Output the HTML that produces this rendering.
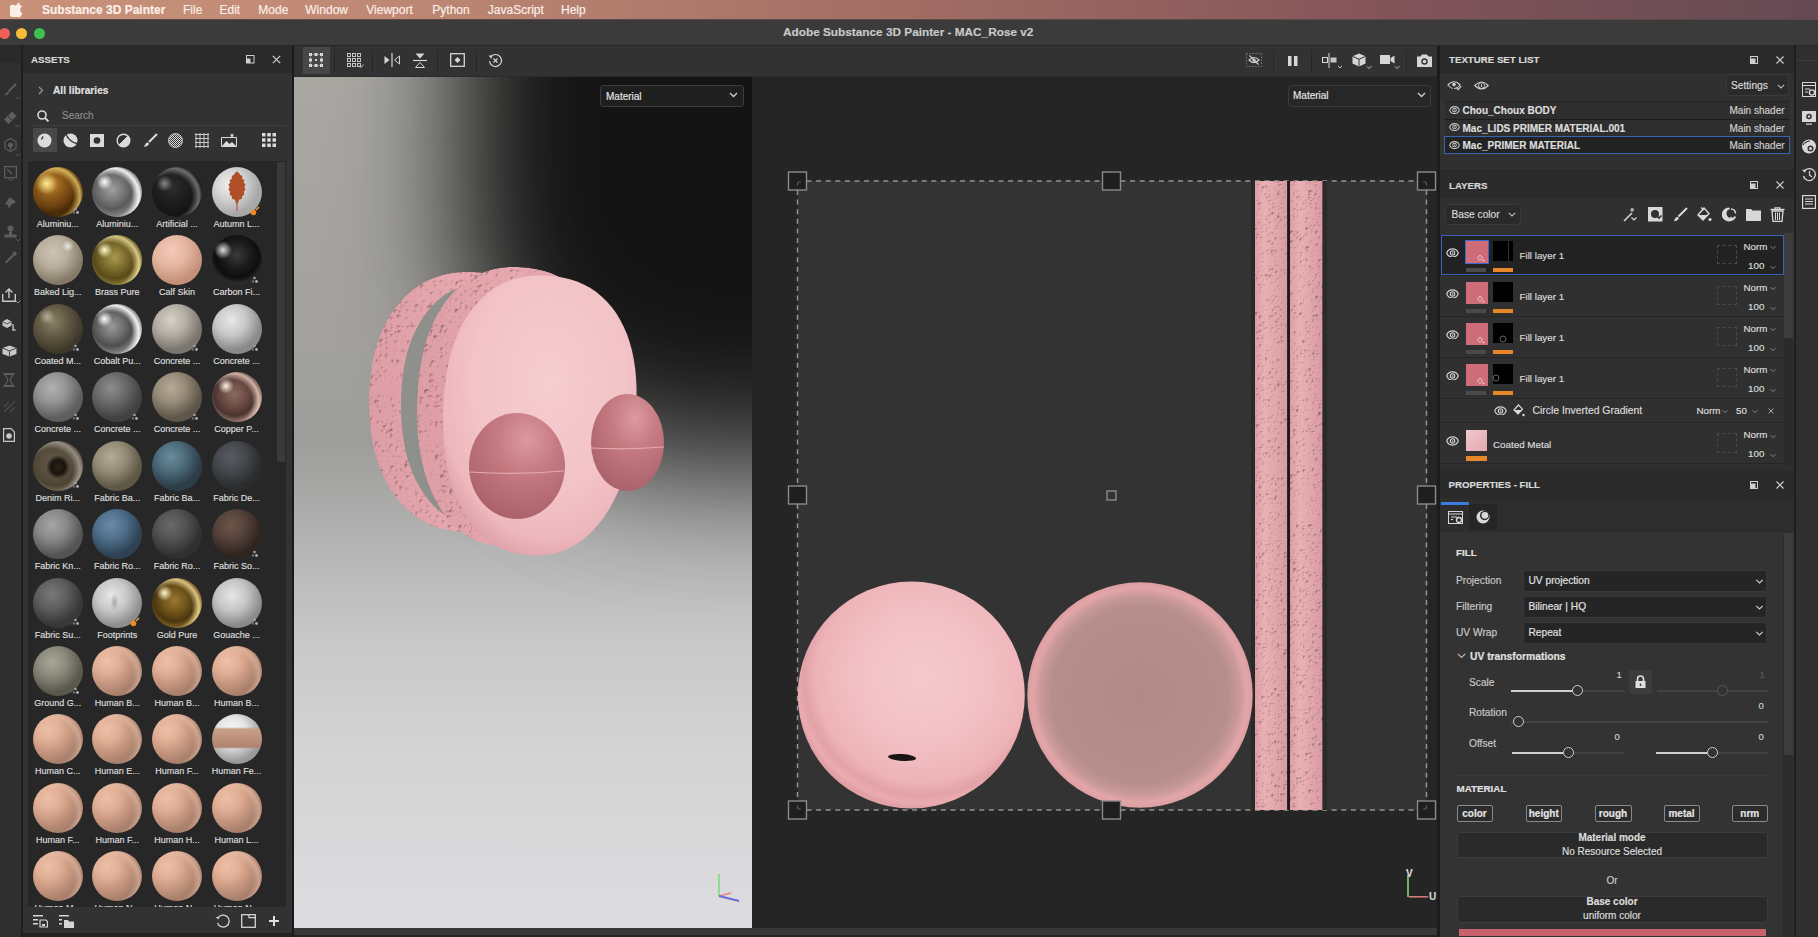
<!DOCTYPE html><html><head><meta charset="utf-8"><style>
*{box-sizing:border-box;margin:0;padding:0}
html,body{width:1818px;height:937px;overflow:hidden;background:#2d2d2d;font-family:"Liberation Sans",sans-serif;color:#d0d0d0}
.ab{position:absolute}
.t{position:absolute;white-space:pre;line-height:1;-webkit-text-stroke:0.18px currentColor}
</style></head><body>
<div class="ab" style="left:0;top:0;width:1818px;height:20px;background:linear-gradient(90deg,#c99178 0%,#bf8975 20%,#b07c6c 35%,#9c6862 55%,#84555a 75%,#654a53 100%)"></div>
<div class="ab" style="left:0;top:19px;width:1818px;height:1px;background:#5a4a48"></div>
<div class="t" style="left:42px;top:4px;font-size:12px;font-weight:700;color:#fbeee8">Substance 3D Painter</div>
<div class="t" style="left:183px;top:4px;font-size:12px;font-weight:400;color:#fbeee8">File</div>
<div class="t" style="left:219.5px;top:4px;font-size:12px;font-weight:400;color:#fbeee8">Edit</div>
<div class="t" style="left:258.3px;top:4px;font-size:12px;font-weight:400;color:#fbeee8">Mode</div>
<div class="t" style="left:305.3px;top:4px;font-size:12px;font-weight:400;color:#fbeee8">Window</div>
<div class="t" style="left:366.3px;top:4px;font-size:12px;font-weight:400;color:#fbeee8">Viewport</div>
<div class="t" style="left:432.3px;top:4px;font-size:12px;font-weight:400;color:#fbeee8">Python</div>
<div class="t" style="left:487.8px;top:4px;font-size:12px;font-weight:400;color:#fbeee8">JavaScript</div>
<div class="t" style="left:561px;top:4px;font-size:12px;font-weight:400;color:#fbeee8">Help</div>
<svg class="ab" style="left:10px;top:2px" width="14" height="15" viewBox="0 0 14 15"><path d="M9.6 0.5c0.1 1-0.3 2-0.9 2.7-0.6 0.7-1.5 1.2-2.4 1.1-0.1-1 0.4-2 0.9-2.6 0.6-0.7 1.6-1.2 2.4-1.2zM12.6 11.1c-0.4 0.9-0.6 1.3-1.1 2.1-0.7 1.1-1.7 2.4-2.9 2.4-1.1 0-1.4-0.7-2.9-0.7-1.5 0-1.8 0.7-2.9 0.7-1.200 0-2.1-1.200-2.8-2.300-2-3-2.2-6.600-1-8.500 0.9-1.3 2.200-2.1 3.500-2.1 1.300 0 2.100 0.700 3.200 0.700 1 0 1.700-0.700 3.100-0.700 1.200 0 2.400 0.600 3.300 1.700-2.900 1.600-2.400 5.700 0.500 6.800z" fill="#fbeee8"/></svg>
<div class="ab" style="left:0;top:20px;width:1818px;height:26px;background:#3b3b3b"></div>
<div class="ab" style="left:0;top:45px;width:1818px;height:1px;background:#262626"></div>
<div class="ab" style="left:-0.7999999999999998px;top:27.5px;width:11px;height:11px;border-radius:50%;background:#ee5f58"></div>
<div class="ab" style="left:16.3px;top:27.5px;width:11px;height:11px;border-radius:50%;background:#f6bd3b"></div>
<div class="ab" style="left:33.7px;top:27.5px;width:11px;height:11px;border-radius:50%;background:#3fc24b"></div>
<div class="t" style="left:783px;top:27px;font-size:11.8px;font-weight:700;color:#c9c9c9">Adobe Substance 3D Painter - MAC_Rose v2</div>
<div class="ab" style="left:0;top:46px;width:21px;height:891px;background:#2f2f2f"></div>
<div class="ab" style="left:21px;top:46px;width:2px;height:891px;background:#1e1e1e"></div>
<div class="ab" style="left:23px;top:46px;width:269px;height:887px;background:#323232"></div>
<div class="ab" style="left:23px;top:46px;width:269px;height:27px;background:#2a2a2a"></div>
<div class="t" style="left:31px;top:55px;font-size:9.7px;font-weight:700;color:#d8d8d8">ASSETS</div>
<div class="ab" style="left:28px;top:161px;width:258px;height:746px;background:#272727"></div>
<div class="ab" style="left:277px;top:162px;width:8px;height:300px;background:#3a3a3a"></div>
<div class="ab" style="left:292px;top:46px;width:2px;height:891px;background:#1a1a1a"></div>
<div class="ab" style="left:23px;top:933px;width:269px;height:4px;background:#222"></div>
<svg class="ab" style="left:246px;top:55px" width="9" height="9" viewBox="0 0 9 9"><rect x="0.5" y="0.5" width="7.5" height="7.5" fill="none" stroke="#cfcfcf" stroke-width="1"/><path d="M0.5 3.5h4v4.5h-4z" fill="#cfcfcf"/></svg>
<svg class="ab" style="left:272px;top:55px" width="9" height="9" viewBox="0 0 9 9"><path d="M0.8 0.8L8.2 8.2M8.2 0.8L0.8 8.2" stroke="#cfcfcf" stroke-width="1.2"/></svg>
<svg class="ab" style="left:38px;top:86px" width="6" height="9" viewBox="0 0 6 9"><path d="M1 1l3.5 3.5L1 8" fill="none" stroke="#9a9a9a" stroke-width="1.2"/></svg>
<div class="t" style="left:53px;top:85.5px;font-size:10.2px;font-weight:700;color:#e0e0e0">All libraries</div>
<svg class="ab" style="left:37px;top:110px" width="13" height="12" viewBox="0 0 13 12"><circle cx="5" cy="5" r="4" fill="none" stroke="#d8d8d8" stroke-width="1.6"/><path d="M8 8l3.5 3.5" stroke="#d8d8d8" stroke-width="1.8"/></svg>
<div class="t" style="left:62px;top:111px;font-size:10px;color:#8a8a8a">Search</div>
<div class="ab" style="left:32px;top:125px;width:254px;height:1px;background:#3e3e3e"></div>
<div class="ab" style="left:33px;top:128px;width:24px;height:24px;background:#484848"></div>
<svg class="ab" style="left:37px;top:133px" width="15" height="15" viewBox="0 0 15 15"><circle cx="7.5" cy="7.5" r="7" fill="#dcdcdc"/><path d="M4.5 6.5l1.5-3" stroke="#333" stroke-width="1.6"/></svg>
<svg class="ab" style="left:63px;top:133px" width="15" height="15" viewBox="0 0 15 15"><circle cx="7.5" cy="7.5" r="7" fill="#dcdcdc"/><path d="M3 1.5c2 4 5 8 11 9" fill="none" stroke="#333" stroke-width="1.5"/></svg>
<svg class="ab" style="left:90px;top:134px" width="14" height="13" viewBox="0 0 14 13"><rect x="0" y="0" width="14" height="13" fill="#dcdcdc"/><circle cx="7" cy="6.5" r="3.3" fill="#333"/></svg>
<svg class="ab" style="left:116px;top:133px" width="15" height="15" viewBox="0 0 15 15"><circle cx="7.5" cy="7.5" r="6.3" fill="none" stroke="#dcdcdc" stroke-width="1.4"/><path d="M12 3A6.3 6.3 0 0 1 3 12z" fill="#dcdcdc"/><path d="M3.5 11.5L11.5 3.5" stroke="#dcdcdc" stroke-width="1"/></svg>
<svg class="ab" style="left:143px;top:133px" width="15" height="15" viewBox="0 0 15 15"><path d="M14 1L6 9" stroke="#dcdcdc" stroke-width="2"/><path d="M5 9.5c-2 0-3 2-4 4.5 2.5-0.5 5-1.5 5-3.5z" fill="#dcdcdc"/></svg>
<svg class="ab" style="left:168px;top:133px" width="15" height="15" viewBox="0 0 15 15"><defs><pattern id="chk" width="2" height="2" patternUnits="userSpaceOnUse"><rect width="1" height="1" fill="#dcdcdc"/><rect x="1" y="1" width="1" height="1" fill="#dcdcdc"/></pattern></defs><circle cx="7.5" cy="7.5" r="7" fill="url(#chk)"/><circle cx="7.5" cy="7.5" r="7" fill="none" stroke="#dcdcdc" stroke-width="0.8"/></svg>
<svg class="ab" style="left:194px;top:133px" width="16" height="15" viewBox="0 0 16 15"><path d="M1 1.5h14M1 5.5h14M1 9.5h14M1 13.5h14M2 0v15M6 0v15M10 0v15M14 0v15" stroke="#dcdcdc" stroke-width="1" opacity="0.9"/></svg>
<svg class="ab" style="left:221px;top:132px" width="16" height="15" viewBox="0 0 16 15"><path d="M0.5 5.5h15v9h-15z" fill="none" stroke="#dcdcdc" stroke-width="1"/><path d="M1 14l4.5-5 3 3 2.5-2 4 4z" fill="#dcdcdc"/><path d="M11 1l0.6 1.6 1.6 0.2-1.2 1 0.4 1.6-1.4-0.9-1.4 0.9 0.4-1.6-1.2-1 1.6-0.2z" fill="#dcdcdc"/></svg>
<svg class="ab" style="left:262px;top:133px" width="14" height="14" viewBox="0 0 14 14"><g fill="#dcdcdc"><rect x="0" y="0" width="3.5" height="3.5"/><rect x="5.25" y="0" width="3.5" height="3.5"/><rect x="10.5" y="0" width="3.5" height="3.5"/><rect x="0" y="5.25" width="3.5" height="3.5"/><rect x="5.25" y="5.25" width="3.5" height="3.5"/><rect x="10.5" y="5.25" width="3.5" height="3.5"/><rect x="0" y="10.5" width="3.5" height="3.5"/><rect x="5.25" y="10.5" width="3.5" height="3.5"/><rect x="10.5" y="10.5" width="3.5" height="3.5"/></g></svg>
<div class="ab" style="left:28px;top:161px;width:249px;height:746px;overflow:hidden">
<div class="ab" style="left:4.8px;top:5.8px;width:50px;height:50px;border-radius:50%;background:radial-gradient(circle 11px at 27% 33%,rgba(255,240,150,0.95) 0%,rgba(255,255,255,0) 100%),radial-gradient(circle 32px at 38% 58%,transparent 21px,rgba(255,220,120,0.7) 28px,transparent 32px),radial-gradient(circle 28px at 35% 35%,#c08a30 0%,#8e5a18 45%,#6a4010 80%,#4a2c08 100%)"></div>
<div class="t" style="left:-10.2px;width:80px;text-align:center;top:58.8px;font-size:9px;color:#dcdcdc">Aluminiu...</div>
<svg class="ab" style="left:43.8px;top:46.3px" width="8" height="8" viewBox="0 0 8 8"><circle cx="3.5" cy="2" r="1.3" fill="#a0a0a0"/><circle cx="2" cy="5.5" r="1.2" fill="#707070"/><circle cx="5.5" cy="5.5" r="1.4" fill="#b0b0b0"/></svg>
<div class="ab" style="left:64.2px;top:5.8px;width:50px;height:50px;border-radius:50%;background:radial-gradient(circle 8px at 25% 30%,rgba(255,255,255,1) 0%,rgba(255,255,255,0) 100%),radial-gradient(circle 32px at 38% 58%,transparent 21px,rgba(255,255,255,0.9) 28px,transparent 32px),radial-gradient(circle 28px at 40% 45%,#a0a0a0 0%,#787878 40%,#5a5a5a 70%,#8a8a8a 100%)"></div>
<div class="t" style="left:49.2px;width:80px;text-align:center;top:58.8px;font-size:9px;color:#dcdcdc">Aluminiu...</div>
<div class="ab" style="left:124.0px;top:5.8px;width:50px;height:50px;border-radius:50%;background:radial-gradient(circle 8px at 25% 33%,rgba(200,200,200,0.6) 0%,rgba(255,255,255,0) 100%),radial-gradient(circle 32px at 38% 58%,transparent 21px,rgba(180,180,180,0.55) 28px,transparent 32px),radial-gradient(circle 28px at 40% 40%,#2e2e2e 0%,#1c1c1c 60%,#141414 100%)"></div>
<div class="t" style="left:109.0px;width:80px;text-align:center;top:58.8px;font-size:9px;color:#dcdcdc">Artificial ...</div>
<div class="ab" style="left:183.5px;top:5.8px;width:50px;height:50px;border-radius:50%;background:radial-gradient(circle 30px at 35% 35%,#f0f0f0 0%,#d2d2d2 50%,#a8a8a8 100%)"></div>
<div class="t" style="left:168.5px;width:80px;text-align:center;top:58.8px;font-size:9px;color:#dcdcdc">Autumn L...</div>
<svg class="ab" style="left:221.5px;top:44.8px" width="10" height="10" viewBox="0 0 10 10"><circle cx="3.5" cy="6.5" r="2.8" fill="#f08a20"/><path d="M6 4l3-3" stroke="#f0a040" stroke-width="1.6"/></svg>
<div class="ab" style="left:4.8px;top:74.2px;width:50px;height:50px;border-radius:50%;background:radial-gradient(circle 6px at 70% 22%,rgba(255,255,255,0.7) 0%,rgba(255,255,255,0) 100%),radial-gradient(circle 30px at 40% 35%,#cdc4b4 0%,#b8ae9c 50%,#857a68 100%)"></div>
<div class="t" style="left:-10.2px;width:80px;text-align:center;top:127.2px;font-size:9px;color:#dcdcdc">Baked Lig...</div>
<div class="ab" style="left:64.2px;top:74.2px;width:50px;height:50px;border-radius:50%;background:radial-gradient(circle 8px at 25% 30%,rgba(255,250,200,1) 0%,rgba(255,255,255,0) 100%),radial-gradient(circle 32px at 38% 58%,transparent 21px,rgba(255,240,170,0.75) 28px,transparent 32px),radial-gradient(circle 28px at 45% 45%,#a89a50 0%,#7a6a2a 45%,#5a4a18 75%,#8a7a38 100%)"></div>
<div class="t" style="left:49.2px;width:80px;text-align:center;top:127.2px;font-size:9px;color:#dcdcdc">Brass Pure</div>
<div class="ab" style="left:124.0px;top:74.2px;width:50px;height:50px;border-radius:50%;background:radial-gradient(circle 32px at 38% 30%,#f2cab8 0%,#e6b6a2 50%,#c49078 100%)"></div>
<div class="t" style="left:109.0px;width:80px;text-align:center;top:127.2px;font-size:9px;color:#dcdcdc">Calf Skin</div>
<div class="ab" style="left:183.5px;top:74.2px;width:50px;height:50px;border-radius:50%;background:radial-gradient(circle 9px at 22% 30%,rgba(255,255,255,0.85) 0%,rgba(255,255,255,0) 100%),radial-gradient(circle 28px at 50% 40%,#3a3a3a 0%,#1a1a1a 50%,#0e0e0e 80%,#2a2a2a 100%)"></div>
<div class="t" style="left:168.5px;width:80px;text-align:center;top:127.2px;font-size:9px;color:#dcdcdc">Carbon Fi...</div>
<svg class="ab" style="left:222.5px;top:114.8px" width="8" height="8" viewBox="0 0 8 8"><circle cx="3.5" cy="2" r="1.3" fill="#a0a0a0"/><circle cx="2" cy="5.5" r="1.2" fill="#707070"/><circle cx="5.5" cy="5.5" r="1.4" fill="#b0b0b0"/></svg>
<div class="ab" style="left:4.8px;top:142.7px;width:50px;height:50px;border-radius:50%;background:radial-gradient(circle 8px at 28% 25%,rgba(220,215,190,0.6) 0%,rgba(255,255,255,0) 100%),radial-gradient(circle 30px at 40% 35%,#8a8268 0%,#625a44 50%,#3e382a 100%)"></div>
<div class="t" style="left:-10.2px;width:80px;text-align:center;top:195.7px;font-size:9px;color:#dcdcdc">Coated M...</div>
<svg class="ab" style="left:43.8px;top:183.2px" width="8" height="8" viewBox="0 0 8 8"><circle cx="3.5" cy="2" r="1.3" fill="#a0a0a0"/><circle cx="2" cy="5.5" r="1.2" fill="#707070"/><circle cx="5.5" cy="5.5" r="1.4" fill="#b0b0b0"/></svg>
<div class="ab" style="left:64.2px;top:142.7px;width:50px;height:50px;border-radius:50%;background:radial-gradient(circle 8px at 25% 30%,rgba(255,255,255,1) 0%,rgba(255,255,255,0) 100%),radial-gradient(circle 32px at 38% 58%,transparent 21px,rgba(255,255,255,0.9) 28px,transparent 32px),radial-gradient(circle 28px at 40% 45%,#9a9a9a 0%,#707070 40%,#4e4e4e 70%,#8a8a8a 100%)"></div>
<div class="t" style="left:49.2px;width:80px;text-align:center;top:195.7px;font-size:9px;color:#dcdcdc">Cobalt Pu...</div>
<div class="ab" style="left:124.0px;top:142.7px;width:50px;height:50px;border-radius:50%;background:radial-gradient(circle 30px at 38% 32%,#d6d2ca 0%,#b4aea4 50%,#7a766e 100%)"></div>
<div class="t" style="left:109.0px;width:80px;text-align:center;top:195.7px;font-size:9px;color:#dcdcdc">Concrete ...</div>
<svg class="ab" style="left:163.0px;top:183.2px" width="8" height="8" viewBox="0 0 8 8"><circle cx="3.5" cy="2" r="1.3" fill="#a0a0a0"/><circle cx="2" cy="5.5" r="1.2" fill="#707070"/><circle cx="5.5" cy="5.5" r="1.4" fill="#b0b0b0"/></svg>
<div class="ab" style="left:183.5px;top:142.7px;width:50px;height:50px;border-radius:50%;background:radial-gradient(circle 30px at 38% 32%,#e8e8e8 0%,#c8c8c8 50%,#8a8a8a 100%)"></div>
<div class="t" style="left:168.5px;width:80px;text-align:center;top:195.7px;font-size:9px;color:#dcdcdc">Concrete ...</div>
<svg class="ab" style="left:222.5px;top:183.2px" width="8" height="8" viewBox="0 0 8 8"><circle cx="3.5" cy="2" r="1.3" fill="#a0a0a0"/><circle cx="2" cy="5.5" r="1.2" fill="#707070"/><circle cx="5.5" cy="5.5" r="1.4" fill="#b0b0b0"/></svg>
<div class="ab" style="left:4.8px;top:211.2px;width:50px;height:50px;border-radius:50%;background:radial-gradient(circle 30px at 38% 32%,#b2b2b2 0%,#929292 50%,#5e5e5e 100%)"></div>
<div class="t" style="left:-10.2px;width:80px;text-align:center;top:264.2px;font-size:9px;color:#dcdcdc">Concrete ...</div>
<svg class="ab" style="left:43.8px;top:251.7px" width="8" height="8" viewBox="0 0 8 8"><circle cx="3.5" cy="2" r="1.3" fill="#a0a0a0"/><circle cx="2" cy="5.5" r="1.2" fill="#707070"/><circle cx="5.5" cy="5.5" r="1.4" fill="#b0b0b0"/></svg>
<div class="ab" style="left:64.2px;top:211.2px;width:50px;height:50px;border-radius:50%;background:radial-gradient(circle 30px at 38% 32%,#8c8c8c 0%,#6a6a6a 50%,#424242 100%)"></div>
<div class="t" style="left:49.2px;width:80px;text-align:center;top:264.2px;font-size:9px;color:#dcdcdc">Concrete ...</div>
<svg class="ab" style="left:103.2px;top:251.7px" width="8" height="8" viewBox="0 0 8 8"><circle cx="3.5" cy="2" r="1.3" fill="#a0a0a0"/><circle cx="2" cy="5.5" r="1.2" fill="#707070"/><circle cx="5.5" cy="5.5" r="1.4" fill="#b0b0b0"/></svg>
<div class="ab" style="left:124.0px;top:211.2px;width:50px;height:50px;border-radius:50%;background:radial-gradient(circle 30px at 38% 32%,#b8ab98 0%,#968a78 50%,#5e5648 100%)"></div>
<div class="t" style="left:109.0px;width:80px;text-align:center;top:264.2px;font-size:9px;color:#dcdcdc">Concrete ...</div>
<svg class="ab" style="left:163.0px;top:251.7px" width="8" height="8" viewBox="0 0 8 8"><circle cx="3.5" cy="2" r="1.3" fill="#a0a0a0"/><circle cx="2" cy="5.5" r="1.2" fill="#707070"/><circle cx="5.5" cy="5.5" r="1.4" fill="#b0b0b0"/></svg>
<div class="ab" style="left:183.5px;top:211.2px;width:50px;height:50px;border-radius:50%;background:radial-gradient(circle 8px at 28% 28%,rgba(255,240,230,1) 0%,rgba(255,255,255,0) 100%),radial-gradient(circle 32px at 38% 58%,transparent 21px,rgba(240,210,195,0.8) 28px,transparent 32px),radial-gradient(circle 28px at 45% 45%,#8a6a60 0%,#6a4a42 45%,#4a3430 75%,#9a7a70 100%)"></div>
<div class="t" style="left:168.5px;width:80px;text-align:center;top:264.2px;font-size:9px;color:#dcdcdc">Copper P...</div>
<div class="ab" style="left:4.8px;top:279.6px;width:50px;height:50px;border-radius:50%;background:radial-gradient(circle 12px at 50% 52%,#2a2218 0%,#1a140e 60%,rgba(100,90,70,0.6) 100%),radial-gradient(circle 32px at 38% 58%,transparent 21px,rgba(255,255,255,0.85) 28px,transparent 32px),radial-gradient(circle 28px at 45% 45%,#6a5e50 0%,#4a3e32 50%,#2a2218 80%,#8a8070 100%)"></div>
<div class="t" style="left:-10.2px;width:80px;text-align:center;top:332.6px;font-size:9px;color:#dcdcdc">Denim Ri...</div>
<svg class="ab" style="left:43.8px;top:320.1px" width="8" height="8" viewBox="0 0 8 8"><circle cx="3.5" cy="2" r="1.3" fill="#a0a0a0"/><circle cx="2" cy="5.5" r="1.2" fill="#707070"/><circle cx="5.5" cy="5.5" r="1.4" fill="#b0b0b0"/></svg>
<div class="ab" style="left:64.2px;top:279.6px;width:50px;height:50px;border-radius:50%;background:radial-gradient(circle 30px at 38% 32%,#b4ac96 0%,#948c76 50%,#5e5846 100%)"></div>
<div class="t" style="left:49.2px;width:80px;text-align:center;top:332.6px;font-size:9px;color:#dcdcdc">Fabric Ba...</div>
<div class="ab" style="left:124.0px;top:279.6px;width:50px;height:50px;border-radius:50%;background:radial-gradient(circle 30px at 38% 32%,#6a8c9c 0%,#4c6a7a 50%,#2c3e48 100%)"></div>
<div class="t" style="left:109.0px;width:80px;text-align:center;top:332.6px;font-size:9px;color:#dcdcdc">Fabric Ba...</div>
<div class="ab" style="left:183.5px;top:279.6px;width:50px;height:50px;border-radius:50%;background:radial-gradient(circle 30px at 38% 32%,#585c60 0%,#44484c 50%,#2a2c2e 100%)"></div>
<div class="t" style="left:168.5px;width:80px;text-align:center;top:332.6px;font-size:9px;color:#dcdcdc">Fabric De...</div>
<div class="ab" style="left:4.8px;top:348.0px;width:50px;height:50px;border-radius:50%;background:radial-gradient(circle 30px at 38% 32%,#a6a6a6 0%,#888888 50%,#545454 100%)"></div>
<div class="t" style="left:-10.2px;width:80px;text-align:center;top:401.0px;font-size:9px;color:#dcdcdc">Fabric Kn...</div>
<div class="ab" style="left:64.2px;top:348.0px;width:50px;height:50px;border-radius:50%;background:radial-gradient(circle 30px at 38% 32%,#6a8aa8 0%,#4e6e8a 50%,#2e4254 100%)"></div>
<div class="t" style="left:49.2px;width:80px;text-align:center;top:401.0px;font-size:9px;color:#dcdcdc">Fabric Ro...</div>
<div class="ab" style="left:124.0px;top:348.0px;width:50px;height:50px;border-radius:50%;background:radial-gradient(circle 30px at 38% 32%,#6a6a6a 0%,#525252 50%,#303030 100%)"></div>
<div class="t" style="left:109.0px;width:80px;text-align:center;top:401.0px;font-size:9px;color:#dcdcdc">Fabric Ro...</div>
<div class="ab" style="left:183.5px;top:348.0px;width:50px;height:50px;border-radius:50%;background:radial-gradient(circle 30px at 38% 32%,#6e5648 0%,#54423a 50%,#302420 100%)"></div>
<div class="t" style="left:168.5px;width:80px;text-align:center;top:401.0px;font-size:9px;color:#dcdcdc">Fabric So...</div>
<svg class="ab" style="left:222.5px;top:388.5px" width="8" height="8" viewBox="0 0 8 8"><circle cx="3.5" cy="2" r="1.3" fill="#a0a0a0"/><circle cx="2" cy="5.5" r="1.2" fill="#707070"/><circle cx="5.5" cy="5.5" r="1.4" fill="#b0b0b0"/></svg>
<div class="ab" style="left:4.8px;top:416.5px;width:50px;height:50px;border-radius:50%;background:radial-gradient(circle 30px at 38% 32%,#787878 0%,#5e5e5e 50%,#383838 100%)"></div>
<div class="t" style="left:-10.2px;width:80px;text-align:center;top:469.5px;font-size:9px;color:#dcdcdc">Fabric Su...</div>
<svg class="ab" style="left:43.8px;top:457.0px" width="8" height="8" viewBox="0 0 8 8"><circle cx="3.5" cy="2" r="1.3" fill="#a0a0a0"/><circle cx="2" cy="5.5" r="1.2" fill="#707070"/><circle cx="5.5" cy="5.5" r="1.4" fill="#b0b0b0"/></svg>
<div class="ab" style="left:64.2px;top:416.5px;width:50px;height:50px;border-radius:50%;background:radial-gradient(ellipse 4px 9px at 45% 48%,rgba(120,120,120,0.5) 0%,rgba(120,120,120,0) 100%),radial-gradient(circle 30px at 40% 35%,#e8e8e8 0%,#c8c8c8 50%,#8e8e8e 100%)"></div>
<div class="t" style="left:49.2px;width:80px;text-align:center;top:469.5px;font-size:9px;color:#dcdcdc">Footprints</div>
<svg class="ab" style="left:102.2px;top:455.5px" width="10" height="10" viewBox="0 0 10 10"><circle cx="3.5" cy="6.5" r="2.8" fill="#f08a20"/><path d="M6 4l3-3" stroke="#f0a040" stroke-width="1.6"/></svg>
<div class="ab" style="left:124.0px;top:416.5px;width:50px;height:50px;border-radius:50%;background:radial-gradient(circle 8px at 25% 30%,rgba(255,250,210,1) 0%,rgba(255,255,255,0) 100%),radial-gradient(circle 32px at 38% 58%,transparent 21px,rgba(255,230,160,0.8) 28px,transparent 32px),radial-gradient(circle 28px at 45% 45%,#9a7a30 0%,#6e5218 45%,#4a3610 75%,#8a6a28 100%)"></div>
<div class="t" style="left:109.0px;width:80px;text-align:center;top:469.5px;font-size:9px;color:#dcdcdc">Gold Pure</div>
<div class="ab" style="left:183.5px;top:416.5px;width:50px;height:50px;border-radius:50%;background:radial-gradient(circle 30px at 40% 35%,#e6e6e6 0%,#c6c6c6 50%,#8a8a8a 100%)"></div>
<div class="t" style="left:168.5px;width:80px;text-align:center;top:469.5px;font-size:9px;color:#dcdcdc">Gouache ...</div>
<svg class="ab" style="left:222.5px;top:457.0px" width="8" height="8" viewBox="0 0 8 8"><circle cx="3.5" cy="2" r="1.3" fill="#a0a0a0"/><circle cx="2" cy="5.5" r="1.2" fill="#707070"/><circle cx="5.5" cy="5.5" r="1.4" fill="#b0b0b0"/></svg>
<div class="ab" style="left:4.8px;top:485.0px;width:50px;height:50px;border-radius:50%;background:radial-gradient(circle 30px at 38% 32%,#a8a698 0%,#8a887a 50%,#5a584c 100%)"></div>
<div class="t" style="left:-10.2px;width:80px;text-align:center;top:538.0px;font-size:9px;color:#dcdcdc">Ground G...</div>
<svg class="ab" style="left:43.8px;top:525.5px" width="8" height="8" viewBox="0 0 8 8"><circle cx="3.5" cy="2" r="1.3" fill="#a0a0a0"/><circle cx="2" cy="5.5" r="1.2" fill="#707070"/><circle cx="5.5" cy="5.5" r="1.4" fill="#b0b0b0"/></svg>
<div class="ab" style="left:64.2px;top:485.0px;width:50px;height:50px;border-radius:50%;background:radial-gradient(circle 32px at 38% 58%,transparent 22px,rgba(240,200,180,0.45) 28px,transparent 32px),radial-gradient(circle 34px at 30% 30%,#ecc0a8 0%,#e2b096 35%,#c89880 65%,#a8806c 100%)"></div>
<div class="t" style="left:49.2px;width:80px;text-align:center;top:538.0px;font-size:9px;color:#dcdcdc">Human B...</div>
<div class="ab" style="left:124.0px;top:485.0px;width:50px;height:50px;border-radius:50%;background:radial-gradient(circle 32px at 38% 58%,transparent 22px,rgba(240,200,180,0.45) 28px,transparent 32px),radial-gradient(circle 34px at 30% 30%,#ecc0a8 0%,#e2b096 35%,#c89880 65%,#a8806c 100%)"></div>
<div class="t" style="left:109.0px;width:80px;text-align:center;top:538.0px;font-size:9px;color:#dcdcdc">Human B...</div>
<div class="ab" style="left:183.5px;top:485.0px;width:50px;height:50px;border-radius:50%;background:radial-gradient(circle 32px at 38% 58%,transparent 22px,rgba(240,200,180,0.45) 28px,transparent 32px),radial-gradient(circle 34px at 30% 30%,#ecc0a8 0%,#e2b096 35%,#c89880 65%,#a8806c 100%)"></div>
<div class="t" style="left:168.5px;width:80px;text-align:center;top:538.0px;font-size:9px;color:#dcdcdc">Human B...</div>
<div class="ab" style="left:4.8px;top:553.4px;width:50px;height:50px;border-radius:50%;background:radial-gradient(circle 32px at 38% 58%,transparent 22px,rgba(240,200,180,0.45) 28px,transparent 32px),radial-gradient(circle 34px at 30% 30%,#ecc0a8 0%,#e2b096 35%,#c89880 65%,#a8806c 100%)"></div>
<div class="t" style="left:-10.2px;width:80px;text-align:center;top:606.4px;font-size:9px;color:#dcdcdc">Human C...</div>
<div class="ab" style="left:64.2px;top:553.4px;width:50px;height:50px;border-radius:50%;background:radial-gradient(circle 32px at 38% 58%,transparent 22px,rgba(240,200,180,0.45) 28px,transparent 32px),radial-gradient(circle 34px at 30% 30%,#ecc0a8 0%,#e2b096 35%,#c89880 65%,#a8806c 100%)"></div>
<div class="t" style="left:49.2px;width:80px;text-align:center;top:606.4px;font-size:9px;color:#dcdcdc">Human E...</div>
<div class="ab" style="left:124.0px;top:553.4px;width:50px;height:50px;border-radius:50%;background:radial-gradient(circle 32px at 38% 58%,transparent 22px,rgba(240,200,180,0.45) 28px,transparent 32px),radial-gradient(circle 34px at 30% 30%,#ecc0a8 0%,#e2b096 35%,#c89880 65%,#a8806c 100%)"></div>
<div class="t" style="left:109.0px;width:80px;text-align:center;top:606.4px;font-size:9px;color:#dcdcdc">Human F...</div>
<div class="ab" style="left:183.5px;top:553.4px;width:50px;height:50px;border-radius:50%;background:linear-gradient(180deg,rgba(0,0,0,0) 26%,#c8a088 30%,#b08470 66%,rgba(0,0,0,0) 70%),radial-gradient(circle 30px at 40% 35%,#ffffff 0%,#e2e2e2 50%,#9a9a9a 100%)"></div>
<div class="t" style="left:168.5px;width:80px;text-align:center;top:606.4px;font-size:9px;color:#dcdcdc">Human Fe...</div>
<div class="ab" style="left:4.8px;top:621.9px;width:50px;height:50px;border-radius:50%;background:radial-gradient(circle 32px at 38% 58%,transparent 22px,rgba(240,200,180,0.45) 28px,transparent 32px),radial-gradient(circle 34px at 30% 30%,#ecc0a8 0%,#e2b096 35%,#c89880 65%,#a8806c 100%)"></div>
<div class="t" style="left:-10.2px;width:80px;text-align:center;top:674.9px;font-size:9px;color:#dcdcdc">Human F...</div>
<div class="ab" style="left:64.2px;top:621.9px;width:50px;height:50px;border-radius:50%;background:radial-gradient(circle 32px at 38% 58%,transparent 22px,rgba(240,200,180,0.45) 28px,transparent 32px),radial-gradient(circle 34px at 30% 30%,#ecc0a8 0%,#e2b096 35%,#c89880 65%,#a8806c 100%)"></div>
<div class="t" style="left:49.2px;width:80px;text-align:center;top:674.9px;font-size:9px;color:#dcdcdc">Human F...</div>
<div class="ab" style="left:124.0px;top:621.9px;width:50px;height:50px;border-radius:50%;background:radial-gradient(circle 32px at 38% 58%,transparent 22px,rgba(240,200,180,0.45) 28px,transparent 32px),radial-gradient(circle 34px at 30% 30%,#ecc0a8 0%,#e2b096 35%,#c89880 65%,#a8806c 100%)"></div>
<div class="t" style="left:109.0px;width:80px;text-align:center;top:674.9px;font-size:9px;color:#dcdcdc">Human H...</div>
<div class="ab" style="left:183.5px;top:621.9px;width:50px;height:50px;border-radius:50%;background:radial-gradient(circle 32px at 38% 58%,transparent 22px,rgba(240,200,180,0.45) 28px,transparent 32px),radial-gradient(circle 34px at 30% 30%,#ecc0a8 0%,#e2b096 35%,#c89880 65%,#a8806c 100%)"></div>
<div class="t" style="left:168.5px;width:80px;text-align:center;top:674.9px;font-size:9px;color:#dcdcdc">Human L...</div>
<div class="ab" style="left:4.8px;top:690.3px;width:50px;height:50px;border-radius:50%;background:radial-gradient(circle 32px at 38% 58%,transparent 22px,rgba(240,200,180,0.45) 28px,transparent 32px),radial-gradient(circle 34px at 30% 30%,#ecc0a8 0%,#e2b096 35%,#c89880 65%,#a8806c 100%)"></div>
<div class="t" style="left:-10.2px;width:80px;text-align:center;top:743.3px;font-size:9px;color:#dcdcdc">Human M...</div>
<div class="ab" style="left:64.2px;top:690.3px;width:50px;height:50px;border-radius:50%;background:radial-gradient(circle 32px at 38% 58%,transparent 22px,rgba(240,200,180,0.45) 28px,transparent 32px),radial-gradient(circle 34px at 30% 30%,#ecc0a8 0%,#e2b096 35%,#c89880 65%,#a8806c 100%)"></div>
<div class="t" style="left:49.2px;width:80px;text-align:center;top:743.3px;font-size:9px;color:#dcdcdc">Human N...</div>
<div class="ab" style="left:124.0px;top:690.3px;width:50px;height:50px;border-radius:50%;background:radial-gradient(circle 32px at 38% 58%,transparent 22px,rgba(240,200,180,0.45) 28px,transparent 32px),radial-gradient(circle 34px at 30% 30%,#ecc0a8 0%,#e2b096 35%,#c89880 65%,#a8806c 100%)"></div>
<div class="t" style="left:109.0px;width:80px;text-align:center;top:743.3px;font-size:9px;color:#dcdcdc">Human N...</div>
<div class="ab" style="left:183.5px;top:690.3px;width:50px;height:50px;border-radius:50%;background:radial-gradient(circle 32px at 38% 58%,transparent 22px,rgba(240,200,180,0.45) 28px,transparent 32px),radial-gradient(circle 34px at 30% 30%,#ecc0a8 0%,#e2b096 35%,#c89880 65%,#a8806c 100%)"></div>
<div class="t" style="left:168.5px;width:80px;text-align:center;top:743.3px;font-size:9px;color:#dcdcdc">Human N...</div>
<svg class="ab" style="left:196.5px;top:9px" width="24" height="42" viewBox="0 0 24 42"><path d="M12 1C13 3 15 3 15 5C17 5 18 7 17 9C19 9 20 11 18.5 13C21 13 21 16 19 17C21 18 20.5 21 18.5 21.5C20 23 19 26 17 26C18 28 16 30 14 29.5C14 31 13 33 12.5 34L12.5 41H11.5L11.5 34C11 33 10 31 10 29.5C8 30 6 28 7 26C5 26 4 23 5.5 21.5C3.5 21 3 18 5 17C3 16 3 13 5.5 13C4 11 5 9 7 9C6 7 7 5 9 5C9 3 11 3 12 1Z" fill="#b04e28"/></svg>
</div>
<svg class="ab" style="left:33px;top:915px" width="15" height="13" viewBox="0 0 15 13"><g fill="#d4d4d4"><rect x="0" y="0" width="10" height="1.5"/><rect x="0" y="4" width="5" height="1.5"/><rect x="0" y="8" width="5" height="1.5"/><path d="M7 5h6l1.5 1.5V12H7z" fill="none" stroke="#d4d4d4" stroke-width="1.2"/><rect x="9" y="9" width="3" height="2"/></g></svg>
<svg class="ab" style="left:59px;top:915px" width="15" height="13" viewBox="0 0 15 13"><g fill="#d4d4d4"><rect x="0" y="0" width="10" height="1.5"/><rect x="0" y="4" width="3" height="1.5"/><rect x="0" y="8" width="3" height="1.5"/><path d="M5 5h4l1 1.5h5V13H5z"/></g></svg>
<svg class="ab" style="left:215px;top:914px" width="15" height="14" viewBox="0 0 15 14"><path d="M3 4A6 6 0 1 1 2.5 9" fill="none" stroke="#d4d4d4" stroke-width="1.3"/><path d="M0.5 3.5l3-1 0.5 3z" fill="#d4d4d4"/></svg>
<svg class="ab" style="left:241px;top:914px" width="15" height="14" viewBox="0 0 15 14"><rect x="0.7" y="0.7" width="13.6" height="12.6" fill="none" stroke="#d4d4d4" stroke-width="1.3"/><path d="M8 0.7v3h6.3" fill="none" stroke="#d4d4d4" stroke-width="1.2"/></svg>
<svg class="ab" style="left:269px;top:916px" width="10" height="10" viewBox="0 0 10 10"><path d="M5 0v10M0 5h10" stroke="#e0e0e0" stroke-width="2"/></svg>
<div class="ab" style="left:294px;top:46px;width:1143px;height:31px;background:#323232"></div>
<div class="ab" style="left:294px;top:76px;width:1143px;height:1px;background:#2a2a2a"></div>
<div class="ab" style="left:294px;top:77px;width:458px;height:851px;overflow:hidden;background:linear-gradient(180deg,#a8a7a2 0%,#a2a19d 32%,#9d9d9b 43%,#b4b4b4 55%,#c8c8c8 66%,#d4d4d4 80%,#dddce0 100%)"><div class="ab" style="left:0;top:0;width:458px;height:851px;transform:scaleY(1.15);transform-origin:0 0"><div class="ab" style="left:166px;top:-400px;width:700px;height:730px;border-bottom-left-radius:240px 200px;background:#141414;filter:blur(58px)"></div></div></div>
<svg class="ab" style="left:294px;top:77px" width="458" height="851" viewBox="294 77 458 851">
<defs>
<linearGradient id="bgv" x1="0" y1="0" x2="0" y2="1"><stop offset="0" stop-color="#a9a8a3"/><stop offset="0.4" stop-color="#a6a6a3"/><stop offset="0.62" stop-color="#c2c2c2"/><stop offset="1" stop-color="#e0dfe2"/></linearGradient>
<filter id="blurbg" filterUnits="userSpaceOnUse" x="0" y="-500" width="1400" height="1500"><feGaussianBlur stdDeviation="40"/></filter>
<filter id="tex" x="0" y="0" width="100%" height="100%"><feTurbulence type="turbulence" baseFrequency="0.2" numOctaves="2" seed="3" result="noise"/><feColorMatrix in="noise" type="matrix" values="0 0 0 0 0  0 0 0 0 0  0 0 0 0 0  -1 -1 -1 0 2" result="h"/><feDiffuseLighting in="h" surfaceScale="3.2" diffuseConstant="1.1" lighting-color="#ffffff" result="light"><feDistantLight azimuth="225" elevation="60"/></feDiffuseLighting><feComposite in="light" in2="SourceGraphic" operator="arithmetic" k1="0.62" k2="0" k3="0.42" k4="0" result="lit"/><feComposite in="lit" in2="SourceGraphic" operator="in"/></filter>
<radialGradient id="bodyg" cx="0.55" cy="0.38" r="0.65"><stop offset="0" stop-color="#f6cdd0"/><stop offset="0.6" stop-color="#f2c3c7"/><stop offset="0.86" stop-color="#eeb8bd"/><stop offset="1" stop-color="#dea2a9"/></radialGradient>
<radialGradient id="eyeg" cx="0.6" cy="0.25" r="0.8"><stop offset="0" stop-color="#dc9aa0"/><stop offset="0.4" stop-color="#c67a82"/><stop offset="1" stop-color="#a86068"/></radialGradient>
<linearGradient id="ringg" x1="0" y1="0" x2="1" y2="0"><stop offset="0" stop-color="#dc9ca4"/><stop offset="0.5" stop-color="#e6a8ae"/><stop offset="1" stop-color="#dc9ca4"/></linearGradient>
</defs>
<path fill="url(#ringg)" filter="url(#tex)" d="M567.0 402.0 L566.8 413.6 L566.1 423.6 L565.0 433.2 L563.5 442.3 L561.6 451.0 L559.2 459.4 L556.4 467.4 L553.2 475.0 L549.7 482.2 L545.7 489.0 L541.4 495.3 L536.7 501.3 L531.7 506.7 L526.4 511.6 L520.7 516.1 L514.8 520.0 L508.5 523.4 L502.0 526.2 L495.2 528.5 L488.2 530.2 L480.7 531.4 L472.7 531.9 L463.3 531.9 L455.3 531.4 L447.8 530.2 L440.8 528.5 L434.0 526.2 L427.5 523.4 L421.2 520.0 L415.3 516.1 L409.6 511.6 L404.3 506.7 L399.3 501.3 L394.6 495.3 L390.3 489.0 L386.3 482.2 L382.8 475.0 L379.6 467.4 L376.8 459.4 L374.4 451.0 L372.5 442.3 L371.0 433.2 L369.9 423.6 L369.2 413.6 L369.0 402.0 L369.2 390.4 L369.9 380.4 L371.0 370.8 L372.5 361.7 L374.4 353.0 L376.8 344.6 L379.6 336.6 L382.8 329.0 L386.3 321.8 L390.3 315.0 L394.6 308.7 L399.3 302.7 L404.3 297.3 L409.6 292.4 L415.3 287.9 L421.2 284.0 L427.5 280.6 L434.0 277.8 L440.8 275.5 L447.8 273.8 L455.3 272.6 L463.3 272.1 L472.7 272.1 L480.7 272.6 L488.2 273.8 L495.2 275.5 L502.0 277.8 L508.5 280.6 L514.8 284.0 L520.7 287.9 L526.4 292.4 L531.7 297.3 L536.7 302.7 L541.4 308.7 L545.7 315.0 L549.7 321.8 L553.2 329.0 L556.4 336.6 L559.2 344.6 L561.6 353.0 L563.5 361.7 L565.0 370.8 L566.1 380.4 L566.8 390.4Z"/><path fill="#8e908c" d="M571.0 405.0 L570.8 415.8 L570.2 425.3 L569.3 434.3 L568.0 442.8 L566.3 451.0 L564.3 458.9 L561.9 466.4 L559.2 473.5 L556.1 480.3 L552.7 486.6 L549.0 492.6 L545.0 498.1 L540.7 503.2 L536.1 507.9 L531.3 512.0 L526.2 515.7 L520.8 518.9 L515.2 521.6 L509.4 523.7 L503.3 525.3 L496.9 526.4 L490.0 526.9 L482.0 526.9 L475.1 526.4 L468.7 525.3 L462.6 523.7 L456.8 521.6 L451.2 518.9 L445.8 515.7 L440.7 512.0 L435.9 507.9 L431.3 503.2 L427.0 498.1 L423.0 492.6 L419.3 486.6 L415.9 480.3 L412.8 473.5 L410.1 466.4 L407.7 458.9 L405.7 451.0 L404.0 442.8 L402.7 434.3 L401.8 425.3 L401.2 415.8 L401.0 405.0 L401.2 394.2 L401.8 384.7 L402.7 375.7 L404.0 367.2 L405.7 359.0 L407.7 351.1 L410.1 343.6 L412.8 336.5 L415.9 329.7 L419.3 323.4 L423.0 317.4 L427.0 311.9 L431.3 306.8 L435.9 302.1 L440.7 298.0 L445.8 294.3 L451.2 291.1 L456.8 288.4 L462.6 286.3 L468.7 284.7 L475.1 283.6 L482.0 283.1 L490.0 283.1 L496.9 283.6 L503.3 284.7 L509.4 286.3 L515.2 288.4 L520.8 291.1 L526.2 294.3 L531.3 298.0 L536.1 302.1 L540.7 306.8 L545.0 311.9 L549.0 317.4 L552.7 323.4 L556.1 329.7 L559.2 336.5 L561.9 343.6 L564.3 351.1 L566.3 359.0 L568.0 367.2 L569.3 375.7 L570.2 384.7 L570.8 394.2Z"/>
<path fill="url(#ringg)" filter="url(#tex)" d="M608.8 413.7 L607.2 426.7 L605.4 437.8 L603.3 448.1 L600.9 457.8 L598.1 467.0 L595.0 475.8 L591.6 484.2 L587.8 492.0 L583.8 499.5 L579.4 506.4 L574.8 512.8 L569.9 518.8 L564.8 524.2 L559.4 529.0 L553.8 533.4 L548.0 537.1 L542.0 540.2 L535.8 542.8 L529.3 544.8 L522.6 546.1 L515.5 546.8 L507.8 546.9 L498.6 546.3 L491.1 545.1 L484.2 543.4 L477.7 541.2 L471.6 538.3 L465.7 534.9 L460.2 531.0 L455.0 526.4 L450.0 521.4 L445.4 515.8 L441.1 509.8 L437.1 503.2 L433.4 496.2 L430.1 488.7 L427.1 480.8 L424.5 472.5 L422.2 463.7 L420.4 454.6 L418.9 445.1 L417.8 435.1 L417.2 424.6 L417.0 413.4 L417.2 400.3 L417.9 387.2 L418.9 376.1 L420.4 365.8 L422.2 356.0 L424.4 346.7 L427.0 337.9 L430.1 329.5 L433.5 321.6 L437.3 314.2 L441.5 307.2 L446.0 300.8 L450.9 294.9 L456.2 289.5 L461.7 284.6 L467.6 280.3 L473.8 276.6 L480.3 273.5 L487.0 271.0 L494.1 269.0 L501.4 267.7 L509.2 267.1 L517.7 267.1 L527.9 267.8 L536.2 269.0 L543.8 270.7 L551.0 273.0 L557.7 275.9 L564.0 279.3 L570.0 283.3 L575.6 287.9 L580.8 292.9 L585.6 298.5 L590.1 304.6 L594.1 311.2 L597.7 318.2 L600.9 325.6 L603.6 333.5 L605.9 341.8 L607.7 350.5 L609.1 359.6 L610.0 369.1 L610.5 379.1 L610.5 389.5 L609.9 400.6Z"/>
<path fill="url(#bodyg)" d="M634.8 422.2 L633.2 435.2 L631.4 446.3 L629.3 456.6 L626.9 466.3 L624.1 475.5 L621.0 484.3 L617.6 492.7 L613.8 500.5 L609.8 508.0 L605.4 514.9 L600.8 521.3 L595.9 527.3 L590.8 532.7 L585.4 537.5 L579.8 541.9 L574.0 545.6 L568.0 548.7 L561.8 551.3 L555.3 553.3 L548.6 554.6 L541.5 555.3 L533.8 555.4 L524.6 554.8 L517.1 553.6 L510.2 551.9 L503.7 549.7 L497.6 546.8 L491.7 543.4 L486.2 539.5 L481.0 534.9 L476.0 529.9 L471.4 524.3 L467.1 518.3 L463.1 511.7 L459.4 504.7 L456.1 497.2 L453.1 489.3 L450.5 481.0 L448.2 472.2 L446.4 463.1 L444.9 453.6 L443.8 443.6 L443.2 433.1 L443.0 421.9 L443.2 408.8 L443.9 395.7 L444.9 384.6 L446.4 374.3 L448.2 364.5 L450.4 355.2 L453.0 346.4 L456.1 338.0 L459.5 330.1 L463.3 322.7 L467.5 315.7 L472.0 309.3 L476.9 303.4 L482.2 298.0 L487.7 293.1 L493.6 288.8 L499.8 285.1 L506.3 282.0 L513.0 279.5 L520.1 277.5 L527.4 276.2 L535.2 275.6 L543.7 275.6 L553.9 276.3 L562.2 277.5 L569.8 279.2 L577.0 281.5 L583.7 284.4 L590.0 287.8 L596.0 291.8 L601.6 296.4 L606.8 301.4 L611.6 307.0 L616.1 313.1 L620.1 319.7 L623.7 326.7 L626.9 334.1 L629.6 342.0 L631.9 350.3 L633.7 359.0 L635.1 368.1 L636.0 377.6 L636.5 387.6 L636.5 398.0 L635.9 409.1Z"/>
<ellipse cx="517" cy="466" rx="48" ry="53" fill="url(#eyeg)"/>
<path d="M470 472q47 3 94 -1" stroke="#e4aab0" stroke-width="1.2" fill="none"/>
<ellipse cx="627.5" cy="442.5" rx="36.5" ry="48.5" fill="url(#eyeg)"/>
<path d="M591 448q36 2 73 -1" stroke="#e4aab0" stroke-width="1.2" fill="none"/>
<path d="M719 874v22" stroke="#7fd87f" stroke-width="1.6"/>
<path d="M719 896l12 -3" stroke="#f08080" stroke-width="1.6"/>
<path d="M719 896l20 5" stroke="#6a6ad8" stroke-width="2"/>
</svg>
<div class="ab" style="left:599.5px;top:85px;width:144px;height:22px;border:1px solid #3c3c3c;border-radius:3px;background:#1f1f1f"></div>
<div class="t" style="left:606px;top:91.8px;font-size:10px;color:#e4e4e4">Material</div>
<svg class="ab" style="left:729px;top:92px" width="9" height="6" viewBox="0 0 9 6"><path d="M1 1l3.5 3.5L8 1" fill="none" stroke="#cfcfcf" stroke-width="1.3"/></svg>
<div class="ab" style="left:752px;top:77px;width:685px;height:851px;background:#252525"></div>
<div class="ab" style="left:797.5px;top:181px;width:629px;height:629px;background:#333"></div>
<svg class="ab" style="left:752px;top:77px" width="685" height="851" viewBox="752 77 685 851">
<defs>
<radialGradient id="c1g" cx="0.55" cy="0.42" r="0.58"><stop offset="0" stop-color="#f4cacd"/><stop offset="0.5" stop-color="#f2c0c4"/><stop offset="0.8" stop-color="#eeb4b8"/><stop offset="0.9" stop-color="#e2a2a8"/><stop offset="0.96" stop-color="#eaacb0"/><stop offset="1" stop-color="#e0a0a6"/></radialGradient>
<radialGradient id="c2g" cx="0.5" cy="0.5" r="0.5"><stop offset="0" stop-color="#b08a88"/><stop offset="0.78" stop-color="#b68e8e"/><stop offset="0.88" stop-color="#c89898"/><stop offset="0.95" stop-color="#e2a6a8"/><stop offset="1" stop-color="#dc9ea2"/></radialGradient>
<linearGradient id="stg" x1="0" y1="0" x2="1" y2="0"><stop offset="0" stop-color="#dc9ea4"/><stop offset="0.3" stop-color="#e8b0b4"/><stop offset="1" stop-color="#d89aa0"/></linearGradient><filter id="tex2" x="0" y="0" width="100%" height="100%"><feTurbulence type="turbulence" baseFrequency="0.32" numOctaves="2" seed="9" result="noise"/><feColorMatrix in="noise" type="matrix" values="0 0 0 0 0  0 0 0 0 0  0 0 0 0 0  -1 -1 -1 0 2" result="h"/><feDiffuseLighting in="h" surfaceScale="3.4" diffuseConstant="1.1" lighting-color="#ffffff" result="light"><feDistantLight azimuth="225" elevation="60"/></feDiffuseLighting><feComposite in="light" in2="SourceGraphic" operator="arithmetic" k1="0.62" k2="0" k3="0.42" k4="0" result="lit"/><feComposite in="lit" in2="SourceGraphic" operator="in"/></filter>
</defs>
<g fill="none" stroke="#929292" stroke-width="1.5" stroke-dasharray="5 4.6">
<path d="M806.5 181H1102.5M1120.5 181H1417.5M806.5 810H1102.5M1120.5 810H1417.5M797.5 190V486M797.5 504V801M1426.5 190V486M1426.5 504V801"/>
</g>
<rect x="1251" y="181" width="76" height="629" fill="#2a2a2a"/>
<circle cx="911.3" cy="695" r="113.5" fill="url(#c1g)"/>
<ellipse cx="902" cy="757.5" rx="14" ry="3.4" fill="#1a1414" transform="rotate(4 902 757.5)"/>
<circle cx="1140" cy="695" r="112.7" fill="url(#c2g)"/>
<rect x="1255" y="181" width="32.4" height="629" fill="url(#stg)" filter="url(#tex2)"/>
<rect x="1290" y="181" width="32.6" height="629" fill="url(#stg)" filter="url(#tex2)"/>
<rect x="1287.4" y="181" width="2.6" height="629" fill="#1e1a1a"/>

<g fill="#1f1f1f" stroke="#8a8a8a" stroke-width="1.4">
<rect x="788.5" y="172" width="18" height="18"/><rect x="1102.5" y="172" width="18" height="18"/><rect x="1417.5" y="172" width="18" height="18"/>
<rect x="788.5" y="486" width="18" height="18"/><rect x="1417.5" y="486" width="18" height="18"/>
<rect x="788.5" y="801" width="18" height="18"/><rect x="1102.5" y="801" width="18" height="18"/><rect x="1417.5" y="801" width="18" height="18"/>
</g>
<rect x="1107" y="491" width="9" height="9" fill="none" stroke="#9a9a9a" stroke-width="1.2"/><g fill="none" stroke="#5a5a5a" stroke-width="1.2"><path d="M797.5 185.5v-1.5a2 2 0 0 1 2-2h1.5"/><path d="M1426.5 805.5v1.5a2 2 0 0 1 -2 2h-1.5"/><path d="M1426.5 185.5v-1.5a2 2 0 0 0 -2-2h-1.5"/><path d="M797.5 805.5v1.5a2 2 0 0 0 2 2h1.5"/></g>
<path d="M1408 875v22" fill="none" stroke="#7fd87f" stroke-width="1.6"/>
<path d="M1409 896.8h19" stroke="#d87878" stroke-width="1.6"/>
</svg>
<div class="t" style="left:1406px;top:868.5px;font-size:10px;font-weight:700;color:#d8d8d8">V</div>
<div class="t" style="left:1429px;top:892px;font-size:10px;font-weight:700;color:#d0d0d0">U</div>
<div class="ab" style="left:1287.5px;top:85px;width:143px;height:22px;border:1px solid #3a3a3a;border-radius:3px;background:#272727"></div>
<div class="t" style="left:1293px;top:91px;font-size:10px;color:#e4e4e4">Material</div>
<svg class="ab" style="left:1417px;top:92px" width="9" height="6" viewBox="0 0 9 6"><path d="M1 1l3.5 3.5L8 1" fill="none" stroke="#cfcfcf" stroke-width="1.3"/></svg>
<div class="ab" style="left:294px;top:928px;width:1146px;height:7px;background:#383838"></div>
<div class="ab" style="left:294px;top:935px;width:1146px;height:2px;background:#232323"></div>
<div class="ab" style="left:1437px;top:46px;width:3px;height:891px;background:#1c1c1c"></div>
<div class="ab" style="left:1440px;top:46px;width:354px;height:891px;background:#333"></div>
<div class="ab" style="left:1794px;top:46px;width:2px;height:891px;background:#1e1e1e"></div>
<div class="ab" style="left:1796px;top:46px;width:22px;height:891px;background:#2f2f2f"></div>
<div class="ab" style="left:302.5px;top:47px;width:27.5px;height:27px;background:#474747"></div>
<div class="ab" style="left:334px;top:50px;width:1px;height:22px;background:#262626"></div>
<div class="ab" style="left:372px;top:50px;width:1px;height:22px;background:#262626"></div>
<div class="ab" style="left:436.5px;top:50px;width:1px;height:22px;background:#262626"></div>
<div class="ab" style="left:476px;top:50px;width:1px;height:22px;background:#262626"></div>
<div class="ab" style="left:1273px;top:50px;width:1px;height:22px;background:#262626"></div>
<div class="ab" style="left:1310.5px;top:50px;width:1px;height:22px;background:#262626"></div>
<div class="ab" style="left:1405.5px;top:50px;width:1px;height:22px;background:#262626"></div>
<svg class="ab" style="left:309px;top:53px" width="14" height="14" viewBox="0 0 14 14"><g fill="#d6d6d6"><rect x="0" y="0" width="3" height="3"/><rect x="5.5" y="0" width="3" height="3"/><rect x="11" y="0" width="3" height="3"/><rect x="0" y="5.5" width="3" height="3"/><rect x="11" y="5.5" width="3" height="3"/><rect x="0" y="11" width="3" height="3"/><rect x="5.5" y="11" width="3" height="3"/><rect x="11" y="11" width="3" height="3"/><rect x="6" y="6" width="2" height="2"/></g><path d="M1.5 1.5h11v11h-11z" fill="none" stroke="#d6d6d6" stroke-width="0.8" stroke-dasharray="1 1"/></svg>
<svg class="ab" style="left:346.5px;top:53px" width="17" height="16" viewBox="0 0 17 16"><g fill="none" stroke="#d6d6d6" stroke-width="0.9"><rect x="0.5" y="0.5" width="3" height="3"/><rect x="5.5" y="0.5" width="3" height="3"/><rect x="10.5" y="0.5" width="3" height="3"/><rect x="0.5" y="5.5" width="3" height="3"/><rect x="5.5" y="5.5" width="3" height="3"/><rect x="10.5" y="5.5" width="3" height="3"/><rect x="0.5" y="10.5" width="3" height="3"/><rect x="5.5" y="10.5" width="3" height="3"/><rect x="10.5" y="10.5" width="3" height="3"/></g><path d="M12 12.5l2 2 2.5-3" fill="none" stroke="#d6d6d6" stroke-width="0.9"/></svg>
<svg class="ab" style="left:384px;top:53px" width="16" height="14" viewBox="0 0 16 14"><path d="M0.5 3l5 4-5 4z" fill="#d6d6d6"/><path d="M15.5 3l-5 4 5 4z" fill="none" stroke="#d6d6d6" stroke-width="1"/><path d="M8 0v14" stroke="#d6d6d6" stroke-width="1.2"/></svg>
<svg class="ab" style="left:413px;top:53px" width="14" height="15" viewBox="0 0 14 15"><path d="M2.5 0.5h9L7 5.5z" fill="#d6d6d6"/><path d="M2.5 14.5h9L7 9.5z" fill="none" stroke="#d6d6d6" stroke-width="1"/><path d="M0 7.5h14" stroke="#d6d6d6" stroke-width="1.2"/></svg>
<svg class="ab" style="left:450px;top:53px" width="15" height="14" viewBox="0 0 15 14"><rect x="0.7" y="0.7" width="13.6" height="12.6" fill="none" stroke="#d6d6d6" stroke-width="1.3"/><path d="M7.5 4l3 3-3 3-3-3z" fill="#d6d6d6"/></svg>
<svg class="ab" style="left:488px;top:53px" width="15" height="15" viewBox="0 0 15 15"><path d="M3 3.5A6 6 0 1 1 1.5 8" fill="none" stroke="#d6d6d6" stroke-width="1.2"/><path d="M0.5 2.5l3.5 0 -0.5 3.5z" fill="#d6d6d6"/><path d="M5.5 5.5l4 4M9.5 5.5l-4 4" stroke="#d6d6d6" stroke-width="1.1"/></svg>
<svg class="ab" style="left:1246px;top:53px" width="16" height="14" viewBox="0 0 16 14"><rect x="0.5" y="0.5" width="15" height="13" fill="none" stroke="#888" stroke-width="0.8" stroke-dasharray="1.5 1.5"/><path d="M3 7Q8 2 13 7Q8 12 3 7z" fill="none" stroke="#d6d6d6" stroke-width="1.1"/><circle cx="8" cy="7" r="1.6" fill="#d6d6d6"/><path d="M3.5 2.5l9 9" stroke="#d6d6d6" stroke-width="1.1"/></svg>
<svg class="ab" style="left:1287.5px;top:55.5px" width="10" height="10" viewBox="0 0 10 10"><rect x="0" y="0" width="3.5" height="10" fill="#d6d6d6"/><rect x="6" y="0" width="3.5" height="10" fill="#d6d6d6"/></svg>
<svg class="ab" style="left:1322px;top:52px" width="20" height="18" viewBox="0 0 20 18"><path d="M7 1v15" stroke="#d6d6d6" stroke-width="1"/><path d="M0.5 5.5h5v5h-5z" fill="none" stroke="#d6d6d6" stroke-width="1.1"/><path d="M8.5 5.5l6 0 0 5-6 0z" fill="#d6d6d6" opacity="0.9"/><path d="M16 14l2 2 2-2.5" fill="none" stroke="#d6d6d6" stroke-width="0.9"/></svg>
<svg class="ab" style="left:1351.5px;top:53px" width="20" height="17" viewBox="0 0 20 17"><path d="M7 0.5l6.5 2.8v7.2L7 13.5 0.5 10.5V3.3z" fill="#d6d6d6"/><path d="M0.5 3.3L7 6.3l6.5-3M7 6.3v7.2" fill="none" stroke="#323232" stroke-width="1"/><path d="M15 13.5l2 2 2.5-2.5" fill="none" stroke="#d6d6d6" stroke-width="0.9"/></svg>
<svg class="ab" style="left:1379.5px;top:53px" width="20" height="17" viewBox="0 0 20 17"><rect x="0" y="2" width="10" height="9" fill="#d6d6d6"/><path d="M10.5 5l4-2.5v8l-4-2.5z" fill="#d6d6d6"/><path d="M15 13.5l2 2 2.5-2.5" fill="none" stroke="#d6d6d6" stroke-width="0.9"/></svg>
<svg class="ab" style="left:1417px;top:54px" width="15" height="13" viewBox="0 0 15 13"><path d="M0 2.5h3.5l1.5-2h5l1.5 2H15V13H0z" fill="#d6d6d6"/><circle cx="7.5" cy="7.5" r="3.2" fill="#323232"/><circle cx="7.5" cy="7.5" r="1.8" fill="#d6d6d6"/></svg>
<div class="ab" style="left:0;top:46px;width:21px;height:17px;background:#2a2a2a"></div>
<svg class="ab" style="left:4px;top:83px" width="13" height="13" viewBox="0 0 13 13"><path d="M12 1L4.5 8.5" stroke="#5e5e5e" stroke-width="2"/><path d="M4 9c-1.8 0-2.5 1.8-3 3.5 2-0.3 4-1.2 4-3z" fill="#5e5e5e"/></svg>
<svg class="ab" style="left:15px;top:96px" width="6" height="4" viewBox="0 0 6 4"><path d="M0.5 0.5L3 3 5.5 0.5" fill="none" stroke="#5e5e5e" stroke-width="0.9"/></svg>
<svg class="ab" style="left:3px;top:111px" width="14" height="13" viewBox="0 0 14 13"><path d="M9 0.5l4.5 4.5-8 8-4.5-4.5z" fill="#5e5e5e"/><path d="M4.5 4.5l4.5 4.5" stroke="#2f2f2f" stroke-width="1"/></svg>
<svg class="ab" style="left:15px;top:124px" width="6" height="4" viewBox="0 0 6 4"><path d="M0.5 0.5L3 3 5.5 0.5" fill="none" stroke="#5e5e5e" stroke-width="0.9"/></svg>
<svg class="ab" style="left:4px;top:138px" width="13" height="16" viewBox="0 0 13 16"><path d="M6.5 0.5l5.5 3v7l-5.5 3-5.5-3v-7z" fill="none" stroke="#5e5e5e" stroke-width="1.2"/><circle cx="6.5" cy="7" r="2.5" fill="#5e5e5e"/><path d="M6.5 9v4" stroke="#5e5e5e" stroke-width="1.2"/></svg>
<svg class="ab" style="left:15px;top:153px" width="6" height="4" viewBox="0 0 6 4"><path d="M0.5 0.5L3 3 5.5 0.5" fill="none" stroke="#5e5e5e" stroke-width="0.9"/></svg>
<svg class="ab" style="left:4px;top:166px" width="13" height="15" viewBox="0 0 13 15"><rect x="0.6" y="0.6" width="11.8" height="11" fill="none" stroke="#5e5e5e" stroke-width="1.2"/><path d="M3 3l5 5" stroke="#5e5e5e" stroke-width="1.2"/><path d="M4 12.5l2.5 2 2.5-2" fill="none" stroke="#5e5e5e" stroke-width="1"/></svg>
<svg class="ab" style="left:4px;top:196px" width="13" height="14" viewBox="0 0 13 14"><path d="M6 1l6 5-5 3-2 4-1-4-3-1z" fill="#5e5e5e"/></svg>
<svg class="ab" style="left:4px;top:225px" width="13" height="14" viewBox="0 0 13 14"><circle cx="6.5" cy="3.5" r="3" fill="#5e5e5e"/><path d="M5 6.5h3v3h4.5v3H0.5v-3H5z" fill="#5e5e5e"/></svg>
<svg class="ab" style="left:15px;top:238px" width="6" height="4" viewBox="0 0 6 4"><path d="M0.5 0.5L3 3 5.5 0.5" fill="none" stroke="#5e5e5e" stroke-width="0.9"/></svg>
<svg class="ab" style="left:4px;top:251px" width="13" height="13" viewBox="0 0 13 13"><path d="M11.5 1.5l-8 8-2 2.5 2.5-2 8-8z" fill="none" stroke="#5e5e5e" stroke-width="1.4"/><path d="M9 1l3 3" stroke="#5e5e5e" stroke-width="2"/></svg>
<svg class="ab" style="left:2px;top:288px" width="14" height="14" viewBox="0 0 14 14"><path d="M0.7 6v7.3h12.6V6" fill="none" stroke="#c8c8c8" stroke-width="1.4"/><path d="M7 10V1M3.5 4.5L7 1l3.5 3.5" fill="none" stroke="#c8c8c8" stroke-width="1.4"/></svg>
<svg class="ab" style="left:15px;top:300px" width="6" height="4" viewBox="0 0 6 4"><path d="M0.5 0.5L3 3 5.5 0.5" fill="none" stroke="#9a9a9a" stroke-width="0.9"/></svg>
<svg class="ab" style="left:2px;top:318px" width="15" height="13" viewBox="0 0 15 13"><path d="M0.5 3.5L5 1l4.5 2.5v4L5 10 0.5 7.5z" fill="#c8c8c8"/><path d="M0.5 3.5L5 6l4.5-2.5" fill="none" stroke="#2f2f2f" stroke-width="0.8"/><path d="M11 6v6h2.5" fill="none" stroke="#c8c8c8" stroke-width="1.3"/></svg>
<svg class="ab" style="left:2px;top:345px" width="15" height="12" viewBox="0 0 15 12"><path d="M0.5 3L7.5 0.5 14.5 3v6L7.5 11.5 0.5 9z" fill="#c8c8c8"/><path d="M0.5 3l7 3 7-3M7.5 6v5" fill="none" stroke="#2f2f2f" stroke-width="0.9"/></svg>
<svg class="ab" style="left:3px;top:373px" width="12" height="14" viewBox="0 0 12 14"><path d="M0.5 0.6h11M0.5 13.4h11" stroke="#5e5e5e" stroke-width="1.2"/><path d="M2 1.5h8l-3 5.5 3 5.5H2l3-5.5z" fill="none" stroke="#5e5e5e" stroke-width="1.1"/></svg>
<svg class="ab" style="left:3px;top:400px" width="13" height="13" viewBox="0 0 13 13"><path d="M1 12L12 1M1 7l5-5M7 12l5-5" stroke="#4a4a4a" stroke-width="1.3"/></svg>
<svg class="ab" style="left:3px;top:428px" width="12" height="14" viewBox="0 0 12 14"><path d="M0.6 0.6h7.5l3.3 3.3v9.5H0.6z" fill="none" stroke="#c8c8c8" stroke-width="1.2"/><circle cx="6" cy="8" r="2.8" fill="#c8c8c8"/></svg>
<div class="ab" style="left:1440px;top:46px;width:354px;height:27px;background:#2a2a2a"></div>
<div class="t" style="left:1449px;top:54.5px;font-size:9.7px;font-weight:700;color:#d8d8d8;">TEXTURE SET LIST</div>
<svg class="ab" style="left:1750px;top:56px" width="8" height="8" viewBox="0 0 8 8"><rect x="0.5" y="0.5" width="7" height="7" fill="none" stroke="#cfcfcf" stroke-width="1"/><path d="M0.5 2.5h5v5h-5z" fill="#cfcfcf"/></svg>
<svg class="ab" style="left:1776px;top:56px" width="8" height="8" viewBox="0 0 8 8"><path d="M0.5 0.5L7.5 7.5M7.5 0.5L0.5 7.5" stroke="#cfcfcf" stroke-width="1.2"/></svg>
<div class="ab" style="left:1440px;top:73px;width:354px;height:28px;background:#303030"></div>
<svg class="ab" style="left:1447px;top:80px" width="15" height="11" viewBox="0 0 15 11"><path d="M0.8 5Q7 -1.5 13.2 5Q10 8.5 7 8.8" fill="none" stroke="#cfcfcf" stroke-width="1.1"/><path d="M0.8 5Q3 7.5 5.5 8.5" fill="none" stroke="#cfcfcf" stroke-width="1.1"/><circle cx="7" cy="4.6" r="1.8" fill="#cfcfcf"/><path d="M9.5 8l1.7 1.7 3-3.5" fill="none" stroke="#cfcfcf" stroke-width="1.2"/></svg>
<svg class="ab" style="left:1474px;top:80px" width="15" height="11" viewBox="0 0 15 11"><path d="M0.8 5.5Q7.5 -1.5 14.2 5.5Q7.5 12.5 0.8 5.5Z" fill="none" stroke="#cfcfcf" stroke-width="1.1"/><circle cx="7.5" cy="5.5" r="3" fill="none" stroke="#cfcfcf" stroke-width="1"/><path d="M7.5 3.8v3.4" stroke="#cfcfcf" stroke-width="1"/></svg>
<div class="ab" style="left:1726px;top:74px;width:63px;height:22px;border:1px solid #3a3a3a;border-radius:3px;background:#2b2b2b"></div>
<div class="t" style="left:1731px;top:81.3px;font-size:10.2px;font-weight:400;color:#d8d8d8;">Settings</div>
<svg class="ab" style="left:1777px;top:84px" width="8" height="5" viewBox="0 0 8 5"><path d="M0.8 0.8L4 4L7.2 0.8" fill="none" stroke="#bdbdbd" stroke-width="1.1"/></svg>
<div class="ab" style="left:1445px;top:101px;width:345px;height:1px;background:#242424"></div>
<div class="ab" style="left:1445px;top:102px;width:345px;height:17px;background:#2e2e2e"></div>
<div class="ab" style="left:1445px;top:119px;width:345px;height:17px;background:#2e2e2e"></div>
<div class="ab" style="left:1445px;top:118.5px;width:345px;height:1.2px;background:#1c1c1c"></div>
<div class="ab" style="left:1444px;top:136px;width:346px;height:18px;border:1px solid #3a63b0;background:#232323"></div>
<svg class="ab" style="left:1448.5px;top:105.8px" width="11" height="8.2" viewBox="0 0 12 9"><path d="M0.7 4.5C2.2 -0.6 9.8 -0.6 11.3 4.5C9.8 9.6 2.2 9.6 0.7 4.5Z" fill="none" stroke="#c8c8c8" stroke-width="1.15"/><circle cx="6" cy="4.5" r="2" fill="none" stroke="#c8c8c8" stroke-width="1.1"/><circle cx="6" cy="4.5" r="0.7" fill="#c8c8c8"/></svg>
<div class="t" style="left:1462.5px;top:106.0px;font-size:10px;font-weight:700;color:#dcdcdc;">Chou_Choux BODY</div>
<div class="t" style="left:1729.5px;top:106.0px;font-size:10px;font-weight:400;color:#cfcfcf;">Main shader</div>
<svg class="ab" style="left:1448.5px;top:123.3px" width="11" height="8.2" viewBox="0 0 12 9"><path d="M0.7 4.5C2.2 -0.6 9.8 -0.6 11.3 4.5C9.8 9.6 2.2 9.6 0.7 4.5Z" fill="none" stroke="#c8c8c8" stroke-width="1.15"/><circle cx="6" cy="4.5" r="2" fill="none" stroke="#c8c8c8" stroke-width="1.1"/><circle cx="6" cy="4.5" r="0.7" fill="#c8c8c8"/></svg>
<div class="t" style="left:1462.5px;top:123.5px;font-size:10px;font-weight:700;color:#dcdcdc;">Mac_LIDS PRIMER MATERIAL.001</div>
<div class="t" style="left:1729.5px;top:123.5px;font-size:10px;font-weight:400;color:#cfcfcf;">Main shader</div>
<svg class="ab" style="left:1448.5px;top:140.8px" width="11" height="8.2" viewBox="0 0 12 9"><path d="M0.7 4.5C2.2 -0.6 9.8 -0.6 11.3 4.5C9.8 9.6 2.2 9.6 0.7 4.5Z" fill="none" stroke="#c8c8c8" stroke-width="1.15"/><circle cx="6" cy="4.5" r="2" fill="none" stroke="#c8c8c8" stroke-width="1.1"/><circle cx="6" cy="4.5" r="0.7" fill="#c8c8c8"/></svg>
<div class="t" style="left:1462.5px;top:141.0px;font-size:10px;font-weight:700;color:#dcdcdc;">Mac_PRIMER MATERIAL</div>
<div class="t" style="left:1729.5px;top:141.0px;font-size:10px;font-weight:400;color:#cfcfcf;">Main shader</div>
<div class="ab" style="left:1440px;top:155px;width:354px;height:14px;background:#303030"></div>
<div class="ab" style="left:1440px;top:169px;width:354px;height:29px;background:#2a2a2a"></div>
<div class="t" style="left:1449px;top:180.5px;font-size:9.7px;font-weight:700;color:#d8d8d8;">LAYERS</div>
<svg class="ab" style="left:1750px;top:181px" width="8" height="8" viewBox="0 0 8 8"><rect x="0.5" y="0.5" width="7" height="7" fill="none" stroke="#cfcfcf" stroke-width="1"/><path d="M0.5 2.5h5v5h-5z" fill="#cfcfcf"/></svg>
<svg class="ab" style="left:1776px;top:181px" width="8" height="8" viewBox="0 0 8 8"><path d="M0.5 0.5L7.5 7.5M7.5 0.5L0.5 7.5" stroke="#cfcfcf" stroke-width="1.2"/></svg>
<div class="ab" style="left:1440px;top:198px;width:354px;height:35px;background:#303030"></div>
<div class="ab" style="left:1445px;top:204px;width:76px;height:21px;border:1px solid #393939;border-radius:3px;background:#2a2a2a"></div>
<div class="t" style="left:1451.5px;top:209.5px;font-size:10.2px;font-weight:400;color:#d8d8d8;">Base color</div>
<svg class="ab" style="left:1508px;top:212px" width="8" height="5" viewBox="0 0 8 5"><path d="M0.8 0.8L4 4L7.2 0.8" fill="none" stroke="#bdbdbd" stroke-width="1.1"/></svg>
<svg class="ab" style="left:1623px;top:207px" width="16" height="15" viewBox="0 0 16 15"><path d="M1 14L9 6" stroke="#d8d8d8" stroke-width="1.6"/><path d="M9 1v4M7 3h4M8.5 1.5l2 2M10.5 1.5l-2 2" stroke="#d8d8d8" stroke-width="0.9"/><path d="M8.5 10.5l2.5 2.5 2.5-2.5" fill="none" stroke="#d8d8d8" stroke-width="1.2"/></svg>
<svg class="ab" style="left:1648px;top:207px" width="15" height="15" viewBox="0 0 15 15"><rect x="0" y="0" width="14.5" height="14.5" fill="#d8d8d8"/><circle cx="7" cy="7" r="4" fill="#303030"/><path d="M8.5 8.5l2.5 2.5 2.5-2.5" fill="none" stroke="#303030" stroke-width="1.6"/></svg>
<svg class="ab" style="left:1673px;top:207px" width="15" height="15" viewBox="0 0 15 15"><path d="M14 1L5.5 9.5" stroke="#d8d8d8" stroke-width="2"/><path d="M4.5 10c-2 0-2.8 2-3.5 4.3 2.3-0.3 4.8-1.3 4.8-3.5z" fill="#d8d8d8"/></svg>
<svg class="ab" style="left:1697px;top:207px" width="15" height="15" viewBox="0 0 15 15"><path d="M7 1L1 8l5 5 6-6.5z" fill="none" stroke="#d8d8d8" stroke-width="1.4"/><path d="M1.5 8h10L6 13z" fill="#d8d8d8"/><path d="M4 0.5l3 2.5" stroke="#d8d8d8" stroke-width="1.2"/><circle cx="13" cy="12.5" r="1.6" fill="#d8d8d8"/></svg>
<svg class="ab" style="left:1721.5px;top:207px" width="15" height="15" viewBox="0 0 15 15"><path d="M7 0.5A7 7 0 1 0 13.5 9.5" fill="#d8d8d8"/><circle cx="9" cy="6.5" r="4.5" fill="#303030"/><path d="M9 2a4.5 4.5 0 0 1 4.5 4.5" fill="none" stroke="#d8d8d8" stroke-width="1.6"/><path d="M8.5 10l2.5 2.5 2.5-2.5" fill="none" stroke="#d8d8d8" stroke-width="1.4"/></svg>
<svg class="ab" style="left:1745.5px;top:208px" width="15" height="13" viewBox="0 0 15 13"><path d="M0 1h5l1.5 1.5H15V13H0z" fill="#d8d8d8"/></svg>
<svg class="ab" style="left:1770px;top:207px" width="15" height="15" viewBox="0 0 15 15"><path d="M0.5 2.5h14" stroke="#d8d8d8" stroke-width="1.4"/><path d="M5 2.5V0.8h5v1.7" fill="none" stroke="#d8d8d8" stroke-width="1.2"/><path d="M2 4h11l-1 10.5H3z" fill="none" stroke="#d8d8d8" stroke-width="1.3"/><path d="M5.5 5.5v7.5M7.5 5.5v7.5M9.5 5.5v7.5" stroke="#d8d8d8" stroke-width="1"/></svg>
<div class="ab" style="left:1440px;top:233px;width:344px;height:232px;background:#2f2f2f"></div>
<div class="ab" style="left:1784px;top:233px;width:9px;height:232px;background:#2a2a2a"></div>
<div class="ab" style="left:1784px;top:233px;width:9px;height:105px;background:#3c3c3c"></div>
<div class="ab" style="left:1440px;top:234.5px;width:344px;height:41px;background:#222;border-bottom:1px solid #262626"></div>
<div class="ab" style="left:1440.5px;top:234.5px;width:343px;height:40px;border:1.5px solid #3c62b8"></div>
<svg class="ab" style="left:1446px;top:247.5px" width="13" height="9.8" viewBox="0 0 12 9"><path d="M0.7 4.5C2.2 -0.6 9.8 -0.6 11.3 4.5C9.8 9.6 2.2 9.6 0.7 4.5Z" fill="none" stroke="#d0d0d0" stroke-width="1.15"/><circle cx="6" cy="4.5" r="2" fill="none" stroke="#d0d0d0" stroke-width="1.1"/><circle cx="6" cy="4.5" r="0.7" fill="#d0d0d0"/></svg>
<div class="ab" style="left:1465.5px;top:240.5px;width:22px;height:22px;background:#cf6c7a;outline:1px solid #3a6ad0"></div>
<svg class="ab" style="left:1477px;top:253.5px" width="8" height="8" viewBox="0 0 8 8"><path d="M3 1L0.5 4 3 6.5 5.5 4z" fill="none" stroke="#f0d0d8" stroke-width="0.9"/><circle cx="6.5" cy="6.5" r="1" fill="#f0d0d8"/></svg>
<div class="ab" style="left:1466px;top:267.5px;width:20px;height:4px;background:#4a4a4a"></div>
<div class="ab" style="left:1493px;top:241.0px;width:19.5px;height:20px;background:#000"></div>
<div class="ab" style="left:1508px;top:241.0px;width:1.2px;height:20px;background:#333"></div>
<div class="ab" style="left:1493px;top:267.5px;width:19.5px;height:4.5px;background:#e8862a"></div>
<div class="t" style="left:1519.5px;top:250.7px;font-size:9.8px;font-weight:400;color:#dadada;">Fill layer 1</div>
<div class="ab" style="left:1717px;top:244.5px;width:19.5px;height:19.5px;border:1px dashed #4a4a4a"></div>
<div class="t" style="left:1743.5px;top:241.5px;font-size:9.8px;font-weight:400;color:#dadada;">Norm</div>
<svg class="ab" style="left:1769.5px;top:245.2px" width="6" height="5" viewBox="0 0 8 5"><path d="M0.8 0.8L4 4L7.2 0.8" fill="none" stroke="#9a9a9a" stroke-width="1.1"/></svg>
<div class="t" style="left:1748px;top:261.0px;font-size:9.8px;font-weight:400;color:#dadada;">100</div>
<svg class="ab" style="left:1769.5px;top:264.5px" width="6" height="5" viewBox="0 0 8 5"><path d="M0.8 0.8L4 4L7.2 0.8" fill="none" stroke="#9a9a9a" stroke-width="1.1"/></svg>
<div class="ab" style="left:1440px;top:275.5px;width:344px;height:41px;background:#303030;border-bottom:1px solid #262626"></div>
<svg class="ab" style="left:1446px;top:288.5px" width="13" height="9.8" viewBox="0 0 12 9"><path d="M0.7 4.5C2.2 -0.6 9.8 -0.6 11.3 4.5C9.8 9.6 2.2 9.6 0.7 4.5Z" fill="none" stroke="#d0d0d0" stroke-width="1.15"/><circle cx="6" cy="4.5" r="2" fill="none" stroke="#d0d0d0" stroke-width="1.1"/><circle cx="6" cy="4.5" r="0.7" fill="#d0d0d0"/></svg>
<div class="ab" style="left:1465.5px;top:281.5px;width:22px;height:22px;background:#cf6c7a;"></div>
<svg class="ab" style="left:1477px;top:294.5px" width="8" height="8" viewBox="0 0 8 8"><path d="M3 1L0.5 4 3 6.5 5.5 4z" fill="none" stroke="#f0d0d8" stroke-width="0.9"/><circle cx="6.5" cy="6.5" r="1" fill="#f0d0d8"/></svg>
<div class="ab" style="left:1466px;top:308.5px;width:20px;height:4px;background:#4a4a4a"></div>
<div class="ab" style="left:1493px;top:282.0px;width:19.5px;height:20px;background:#000"></div>
<div class="ab" style="left:1493px;top:308.5px;width:19.5px;height:4.5px;background:#e8862a"></div>
<div class="t" style="left:1519.5px;top:291.7px;font-size:9.8px;font-weight:400;color:#dadada;">Fill layer 1</div>
<div class="ab" style="left:1717px;top:285.5px;width:19.5px;height:19.5px;border:1px dashed #4a4a4a"></div>
<div class="t" style="left:1743.5px;top:282.5px;font-size:9.8px;font-weight:400;color:#dadada;">Norm</div>
<svg class="ab" style="left:1769.5px;top:286.2px" width="6" height="5" viewBox="0 0 8 5"><path d="M0.8 0.8L4 4L7.2 0.8" fill="none" stroke="#9a9a9a" stroke-width="1.1"/></svg>
<div class="t" style="left:1748px;top:302.0px;font-size:9.8px;font-weight:400;color:#dadada;">100</div>
<svg class="ab" style="left:1769.5px;top:305.5px" width="6" height="5" viewBox="0 0 8 5"><path d="M0.8 0.8L4 4L7.2 0.8" fill="none" stroke="#9a9a9a" stroke-width="1.1"/></svg>
<div class="ab" style="left:1440px;top:316.5px;width:344px;height:41px;background:#303030;border-bottom:1px solid #262626"></div>
<svg class="ab" style="left:1446px;top:329.5px" width="13" height="9.8" viewBox="0 0 12 9"><path d="M0.7 4.5C2.2 -0.6 9.8 -0.6 11.3 4.5C9.8 9.6 2.2 9.6 0.7 4.5Z" fill="none" stroke="#d0d0d0" stroke-width="1.15"/><circle cx="6" cy="4.5" r="2" fill="none" stroke="#d0d0d0" stroke-width="1.1"/><circle cx="6" cy="4.5" r="0.7" fill="#d0d0d0"/></svg>
<div class="ab" style="left:1465.5px;top:322.5px;width:22px;height:22px;background:#cf6c7a;"></div>
<svg class="ab" style="left:1477px;top:335.5px" width="8" height="8" viewBox="0 0 8 8"><path d="M3 1L0.5 4 3 6.5 5.5 4z" fill="none" stroke="#f0d0d8" stroke-width="0.9"/><circle cx="6.5" cy="6.5" r="1" fill="#f0d0d8"/></svg>
<div class="ab" style="left:1466px;top:349.5px;width:20px;height:4px;background:#4a4a4a"></div>
<div class="ab" style="left:1493px;top:323.0px;width:19.5px;height:20px;background:#000"></div>
<svg class="ab" style="left:1499px;top:334.5px" width="8" height="8"><circle cx="4" cy="4" r="3" fill="none" stroke="#666" stroke-width="1"/></svg>
<div class="ab" style="left:1493px;top:349.5px;width:19.5px;height:4.5px;background:#e8862a"></div>
<div class="t" style="left:1519.5px;top:332.7px;font-size:9.8px;font-weight:400;color:#dadada;">Fill layer 1</div>
<div class="ab" style="left:1717px;top:326.5px;width:19.5px;height:19.5px;border:1px dashed #4a4a4a"></div>
<div class="t" style="left:1743.5px;top:323.5px;font-size:9.8px;font-weight:400;color:#dadada;">Norm</div>
<svg class="ab" style="left:1769.5px;top:327.2px" width="6" height="5" viewBox="0 0 8 5"><path d="M0.8 0.8L4 4L7.2 0.8" fill="none" stroke="#9a9a9a" stroke-width="1.1"/></svg>
<div class="t" style="left:1748px;top:343.0px;font-size:9.8px;font-weight:400;color:#dadada;">100</div>
<svg class="ab" style="left:1769.5px;top:346.5px" width="6" height="5" viewBox="0 0 8 5"><path d="M0.8 0.8L4 4L7.2 0.8" fill="none" stroke="#9a9a9a" stroke-width="1.1"/></svg>
<div class="ab" style="left:1440px;top:357.5px;width:344px;height:41px;background:#303030;border-bottom:1px solid #262626"></div>
<svg class="ab" style="left:1446px;top:370.5px" width="13" height="9.8" viewBox="0 0 12 9"><path d="M0.7 4.5C2.2 -0.6 9.8 -0.6 11.3 4.5C9.8 9.6 2.2 9.6 0.7 4.5Z" fill="none" stroke="#d0d0d0" stroke-width="1.15"/><circle cx="6" cy="4.5" r="2" fill="none" stroke="#d0d0d0" stroke-width="1.1"/><circle cx="6" cy="4.5" r="0.7" fill="#d0d0d0"/></svg>
<div class="ab" style="left:1465.5px;top:363.5px;width:22px;height:22px;background:#cf6c7a;"></div>
<svg class="ab" style="left:1477px;top:376.5px" width="8" height="8" viewBox="0 0 8 8"><path d="M3 1L0.5 4 3 6.5 5.5 4z" fill="none" stroke="#f0d0d8" stroke-width="0.9"/><circle cx="6.5" cy="6.5" r="1" fill="#f0d0d8"/></svg>
<div class="ab" style="left:1466px;top:390.5px;width:20px;height:4px;background:#4a4a4a"></div>
<div class="ab" style="left:1493px;top:364.0px;width:19.5px;height:20px;background:#000"></div>
<svg class="ab" style="left:1492px;top:373.5px" width="8" height="8"><circle cx="4" cy="4" r="3" fill="none" stroke="#666" stroke-width="1"/></svg>
<div class="ab" style="left:1493px;top:390.5px;width:19.5px;height:4.5px;background:#e8862a"></div>
<div class="t" style="left:1519.5px;top:373.7px;font-size:9.8px;font-weight:400;color:#dadada;">Fill layer 1</div>
<div class="ab" style="left:1717px;top:367.5px;width:19.5px;height:19.5px;border:1px dashed #4a4a4a"></div>
<div class="t" style="left:1743.5px;top:364.5px;font-size:9.8px;font-weight:400;color:#dadada;">Norm</div>
<svg class="ab" style="left:1769.5px;top:368.2px" width="6" height="5" viewBox="0 0 8 5"><path d="M0.8 0.8L4 4L7.2 0.8" fill="none" stroke="#9a9a9a" stroke-width="1.1"/></svg>
<div class="t" style="left:1748px;top:384.0px;font-size:9.8px;font-weight:400;color:#dadada;">100</div>
<svg class="ab" style="left:1769.5px;top:387.5px" width="6" height="5" viewBox="0 0 8 5"><path d="M0.8 0.8L4 4L7.2 0.8" fill="none" stroke="#9a9a9a" stroke-width="1.1"/></svg>
<div class="ab" style="left:1440px;top:398.5px;width:344px;height:24px;background:#303030;border-bottom:1px solid #262626"></div>
<svg class="ab" style="left:1494px;top:405.5px" width="13" height="9.8" viewBox="0 0 12 9"><path d="M0.7 4.5C2.2 -0.6 9.8 -0.6 11.3 4.5C9.8 9.6 2.2 9.6 0.7 4.5Z" fill="none" stroke="#d0d0d0" stroke-width="1.15"/><circle cx="6" cy="4.5" r="2" fill="none" stroke="#d0d0d0" stroke-width="1.1"/><circle cx="6" cy="4.5" r="0.7" fill="#d0d0d0"/></svg>
<svg class="ab" style="left:1513px;top:404px" width="12" height="13" viewBox="0 0 12 13"><path d="M5.5 1L1 6l4 4 4.5-4.8z" fill="none" stroke="#d8d8d8" stroke-width="1.2"/><path d="M1.5 6h7.5L5 10z" fill="#d8d8d8"/><circle cx="10.5" cy="11" r="1.2" fill="#d8d8d8"/></svg>
<div class="t" style="left:1532.5px;top:405.5px;font-size:10.4px;font-weight:400;color:#dadada;">Circle Inverted Gradient</div>
<div class="t" style="left:1696.5px;top:405.5px;font-size:9.8px;font-weight:400;color:#dadada;">Norm</div>
<svg class="ab" style="left:1721.5px;top:409px" width="6" height="5" viewBox="0 0 8 5"><path d="M0.8 0.8L4 4L7.2 0.8" fill="none" stroke="#9a9a9a" stroke-width="1.1"/></svg>
<div class="t" style="left:1736px;top:405.5px;font-size:9.8px;font-weight:400;color:#dadada;">50</div>
<svg class="ab" style="left:1752px;top:409px" width="6" height="5" viewBox="0 0 8 5"><path d="M0.8 0.8L4 4L7.2 0.8" fill="none" stroke="#9a9a9a" stroke-width="1.1"/></svg>
<svg class="ab" style="left:1768px;top:407.5px" width="6" height="6" viewBox="0 0 6 6"><path d="M0.5 0.5l5 5M5.5 0.5l-5 5" stroke="#aaa" stroke-width="1"/></svg>
<div class="ab" style="left:1440px;top:423px;width:344px;height:41px;background:#303030;border-bottom:1px solid #262626"></div>
<svg class="ab" style="left:1446px;top:436.0px" width="13" height="9.8" viewBox="0 0 12 9"><path d="M0.7 4.5C2.2 -0.6 9.8 -0.6 11.3 4.5C9.8 9.6 2.2 9.6 0.7 4.5Z" fill="none" stroke="#d0d0d0" stroke-width="1.15"/><circle cx="6" cy="4.5" r="2" fill="none" stroke="#d0d0d0" stroke-width="1.1"/><circle cx="6" cy="4.5" r="0.7" fill="#d0d0d0"/></svg>
<div class="ab" style="left:1466px;top:430px;width:20.5px;height:20.5px;background:linear-gradient(135deg,#f0c8cc,#e4a8b0)"></div>
<div class="ab" style="left:1466px;top:456px;width:20.5px;height:4.5px;background:#e8862a"></div>
<div class="t" style="left:1493px;top:439.5px;font-size:9.8px;font-weight:400;color:#dadada;">Coated Metal</div>
<div class="ab" style="left:1717px;top:433px;width:19.5px;height:19.5px;border:1px dashed #4a4a4a"></div>
<div class="t" style="left:1743.5px;top:429.5px;font-size:9.8px;font-weight:400;color:#dadada;">Norm</div>
<svg class="ab" style="left:1769.5px;top:433.5px" width="6" height="5" viewBox="0 0 8 5"><path d="M0.8 0.8L4 4L7.2 0.8" fill="none" stroke="#9a9a9a" stroke-width="1.1"/></svg>
<div class="t" style="left:1748px;top:448.5px;font-size:9.8px;font-weight:400;color:#dadada;">100</div>
<svg class="ab" style="left:1769.5px;top:452.5px" width="6" height="5" viewBox="0 0 8 5"><path d="M0.8 0.8L4 4L7.2 0.8" fill="none" stroke="#9a9a9a" stroke-width="1.1"/></svg>
<div class="ab" style="left:1440px;top:465px;width:354px;height:6px;background:#2e2e2e"></div>
<div class="ab" style="left:1440px;top:471px;width:354px;height:27px;background:#2a2a2a"></div>
<div class="t" style="left:1448.5px;top:479.8px;font-size:9.7px;font-weight:700;color:#d8d8d8;">PROPERTIES - FILL</div>
<svg class="ab" style="left:1750px;top:481px" width="8" height="8" viewBox="0 0 8 8"><rect x="0.5" y="0.5" width="7" height="7" fill="none" stroke="#cfcfcf" stroke-width="1"/><path d="M0.5 2.5h5v5h-5z" fill="#cfcfcf"/></svg>
<svg class="ab" style="left:1776px;top:481px" width="8" height="8" viewBox="0 0 8 8"><path d="M0.5 0.5L7.5 7.5M7.5 0.5L0.5 7.5" stroke="#cfcfcf" stroke-width="1.2"/></svg>
<div class="ab" style="left:1440px;top:498px;width:354px;height:34px;background:#2d2d2d"></div>
<div class="ab" style="left:1441px;top:502px;width:27.5px;height:2.5px;background:#3d7be0"></div>
<div class="ab" style="left:1469px;top:503.5px;width:28px;height:26px;background:#262626"></div>
<svg class="ab" style="left:1447.5px;top:510.5px" width="15" height="13" viewBox="0 0 15 13"><rect x="0.5" y="0.5" width="14" height="12" fill="none" stroke="#d8d8d8" stroke-width="1"/><path d="M0.5 3h14M3 6h6M3 8.5h2" stroke="#d8d8d8" stroke-width="1"/><circle cx="11" cy="9" r="2.5" fill="none" stroke="#d8d8d8" stroke-width="1.3"/></svg>
<svg class="ab" style="left:1476px;top:510px" width="14" height="14" viewBox="0 0 14 14"><circle cx="7" cy="7" r="6.5" fill="#d8d8d8"/><circle cx="8.6" cy="5.6" r="4.6" fill="#262626"/><circle cx="8.9" cy="5.3" r="3.4" fill="#d8d8d8"/></svg>
<div class="ab" style="left:1440px;top:532px;width:343px;height:405px;background:#333"></div>
<div class="ab" style="left:1783px;top:532px;width:10px;height:405px;background:#2c2c2c"></div>
<div class="ab" style="left:1783.5px;top:533px;width:9px;height:222px;background:#3c3c3c"></div>
<div class="t" style="left:1456px;top:548px;font-size:9.8px;font-weight:700;color:#e0e0e0;">FILL</div>
<div class="t" style="left:1456px;top:575.5px;font-size:10.2px;font-weight:400;color:#c8c8c8;">Projection</div>
<div class="ab" style="left:1522.5px;top:569.5px;width:244.5px;height:22px;border:1px solid #383838;border-radius:3px;background:#252525"></div>
<div class="t" style="left:1528.5px;top:575.5px;font-size:10.2px;font-weight:400;color:#e0e0e0;">UV projection</div>
<svg class="ab" style="left:1754.5px;top:578.5px" width="9" height="5" viewBox="0 0 8 5"><path d="M0.8 0.8L4 4L7.2 0.8" fill="none" stroke="#d0d0d0" stroke-width="1.1"/></svg>
<div class="t" style="left:1456px;top:602px;font-size:10.2px;font-weight:400;color:#c8c8c8;">Filtering</div>
<div class="ab" style="left:1522.5px;top:596px;width:244.5px;height:22px;border:1px solid #383838;border-radius:3px;background:#252525"></div>
<div class="t" style="left:1528.5px;top:602px;font-size:10.2px;font-weight:400;color:#e0e0e0;">Bilinear | HQ</div>
<svg class="ab" style="left:1754.5px;top:605px" width="9" height="5" viewBox="0 0 8 5"><path d="M0.8 0.8L4 4L7.2 0.8" fill="none" stroke="#d0d0d0" stroke-width="1.1"/></svg>
<div class="t" style="left:1456px;top:628px;font-size:10.2px;font-weight:400;color:#c8c8c8;">UV Wrap</div>
<div class="ab" style="left:1522.5px;top:622px;width:244.5px;height:22px;border:1px solid #383838;border-radius:3px;background:#252525"></div>
<div class="t" style="left:1528.5px;top:628px;font-size:10.2px;font-weight:400;color:#e0e0e0;">Repeat</div>
<svg class="ab" style="left:1754.5px;top:631px" width="9" height="5" viewBox="0 0 8 5"><path d="M0.8 0.8L4 4L7.2 0.8" fill="none" stroke="#d0d0d0" stroke-width="1.1"/></svg>
<svg class="ab" style="left:1457px;top:653px" width="9" height="6" viewBox="0 0 9 6"><path d="M0.8 0.8L4.5 4.5L8.2 0.8" fill="none" stroke="#bdbdbd" stroke-width="1.2"/></svg>
<div class="t" style="left:1470px;top:651.5px;font-size:10.3px;font-weight:700;color:#e0e0e0;">UV transformations</div>
<div class="t" style="left:1469px;top:677.5px;font-size:10.2px;font-weight:400;color:#c8c8c8;">Scale</div>
<div class="ab" style="left:1511px;top:689.5px;width:114px;height:2px;background:#434343"></div>
<div class="ab" style="left:1511px;top:689.5px;width:66px;height:2px;background:#cfcfcf"></div>
<div class="ab" style="left:1571.5px;top:685.0px;width:11px;height:11px;border-radius:50%;border:1.8px solid #cfcfcf;background:#333"></div>
<div class="t" style="left:1616.5px;top:670px;font-size:9.5px;font-weight:400;color:#d0d0d0;">1</div>
<div class="ab" style="left:1628.5px;top:670px;width:23.5px;height:23.5px;background:#3c3c3c;border-radius:2px"></div>
<svg class="ab" style="left:1635px;top:675px" width="11" height="13" viewBox="0 0 11 13"><path d="M2.5 6V4a3 3 0 0 1 6 0v2" fill="none" stroke="#e0e0e0" stroke-width="1.6"/><rect x="0.5" y="6" width="10" height="7" fill="#e0e0e0"/><rect x="4.8" y="8.5" width="1.4" height="2.5" fill="#3c3c3c"/></svg>
<div class="ab" style="left:1656.5px;top:689.5px;width:111.5px;height:2px;background:#434343"></div>
<div class="ab" style="left:1716.5px;top:685.0px;width:11px;height:11px;border-radius:50%;border:1.8px solid #5a5a5a;background:#333"></div>
<div class="t" style="left:1759.5px;top:670px;font-size:9.5px;font-weight:400;color:#5a5a5a;">1</div>
<div class="t" style="left:1469px;top:708px;font-size:10.2px;font-weight:400;color:#c8c8c8;">Rotation</div>
<div class="ab" style="left:1511px;top:720.5px;width:257px;height:2px;background:#434343"></div>
<div class="ab" style="left:1512.5px;top:716.0px;width:11px;height:11px;border-radius:50%;border:1.8px solid #cfcfcf;background:#333"></div>
<div class="t" style="left:1758.5px;top:701px;font-size:9.5px;font-weight:400;color:#d0d0d0;">0</div>
<div class="t" style="left:1469px;top:739px;font-size:10.2px;font-weight:400;color:#c8c8c8;">Offset</div>
<div class="ab" style="left:1511.5px;top:751.5px;width:112.5px;height:2px;background:#434343"></div>
<div class="ab" style="left:1511.5px;top:751.5px;width:57.0px;height:2px;background:#cfcfcf"></div>
<div class="ab" style="left:1563.0px;top:747.0px;width:11px;height:11px;border-radius:50%;border:1.8px solid #cfcfcf;background:#333"></div>
<div class="t" style="left:1614.5px;top:732px;font-size:9.5px;font-weight:400;color:#d0d0d0;">0</div>
<div class="ab" style="left:1656px;top:751.5px;width:112px;height:2px;background:#434343"></div>
<div class="ab" style="left:1656px;top:751.5px;width:56px;height:2px;background:#cfcfcf"></div>
<div class="ab" style="left:1706.5px;top:747.0px;width:11px;height:11px;border-radius:50%;border:1.8px solid #cfcfcf;background:#333"></div>
<div class="t" style="left:1758.5px;top:732px;font-size:9.5px;font-weight:400;color:#d0d0d0;">0</div>
<div class="ab" style="left:1456px;top:774.5px;width:312px;height:1px;background:#3a3a3a"></div>
<div class="t" style="left:1456.5px;top:784px;font-size:9.8px;font-weight:700;color:#e0e0e0;">MATERIAL</div>
<div class="ab" style="left:1456.5px;top:805px;width:36.0px;height:16.5px;border:1px solid #8a8a8a;border-radius:2px;background:#2c2c2c"></div>
<div class="t" style="left:1456.5px;width:36.0px;text-align:center;top:808.5px;font-size:10px;font-weight:700;color:#e4e4e4">color</div>
<div class="ab" style="left:1525.5px;top:805px;width:36.5px;height:16.5px;border:1px solid #8a8a8a;border-radius:2px;background:#2c2c2c"></div>
<div class="t" style="left:1525.5px;width:36.5px;text-align:center;top:808.5px;font-size:10px;font-weight:700;color:#e4e4e4">height</div>
<div class="ab" style="left:1594.5px;top:805px;width:37.0px;height:16.5px;border:1px solid #8a8a8a;border-radius:2px;background:#2c2c2c"></div>
<div class="t" style="left:1594.5px;width:37.0px;text-align:center;top:808.5px;font-size:10px;font-weight:700;color:#e4e4e4">rough</div>
<div class="ab" style="left:1663.5px;top:805px;width:36.0px;height:16.5px;border:1px solid #8a8a8a;border-radius:2px;background:#2c2c2c"></div>
<div class="t" style="left:1663.5px;width:36.0px;text-align:center;top:808.5px;font-size:10px;font-weight:700;color:#e4e4e4">metal</div>
<div class="ab" style="left:1731.5px;top:805px;width:36.5px;height:16.5px;border:1px solid #8a8a8a;border-radius:2px;background:#2c2c2c"></div>
<div class="t" style="left:1731.5px;width:36.5px;text-align:center;top:808.5px;font-size:10px;font-weight:700;color:#e4e4e4">nrm</div>
<div class="ab" style="left:1456.5px;top:831.5px;width:311.5px;height:26.5px;border:1px solid #3c3c3c;border-radius:2px;background:#2a2a2a"></div>
<div class="t" style="left:1456px;width:312px;text-align:center;top:832.5px;font-size:10px;font-weight:700;color:#dcdcdc">Material mode</div>
<div class="t" style="left:1456px;width:312px;text-align:center;top:847px;font-size:10px;color:#dcdcdc">No Resource Selected</div>
<div class="ab" style="left:1456px;top:870px;width:312px;height:1px;background:#383838"></div>
<div class="t" style="left:1456px;width:312px;text-align:center;top:876px;font-size:10px;color:#c8c8c8">Or</div>
<div class="ab" style="left:1457px;top:895.5px;width:311px;height:27px;border:1px solid #3c3c3c;border-radius:2px;background:#2a2a2a"></div>
<div class="t" style="left:1456px;width:312px;text-align:center;top:896.5px;font-size:10px;font-weight:700;color:#dcdcdc">Base color</div>
<div class="t" style="left:1456px;width:312px;text-align:center;top:911px;font-size:10px;color:#dcdcdc">uniform color</div>
<div class="ab" style="left:1458.5px;top:928.5px;width:307.5px;height:7px;background:#c8606e"></div>
<svg class="ab" style="left:1802px;top:81.5px" width="14" height="15" viewBox="0 0 14 15"><rect x="0.5" y="0.5" width="13" height="14" fill="none" stroke="#d8d8d8" stroke-width="1"/><path d="M0.5 3.5h13M3 7h5M3 10h3" stroke="#d8d8d8" stroke-width="1"/><circle cx="10" cy="10.5" r="2.6" fill="none" stroke="#d8d8d8" stroke-width="1.4"/></svg>
<svg class="ab" style="left:1802px;top:110.5px" width="14" height="14" viewBox="0 0 14 14"><rect x="0" y="0" width="14" height="11" fill="#d8d8d8"/><circle cx="7" cy="5.5" r="2.8" fill="#2f2f2f"/><circle cx="7" cy="5.5" r="1.2" fill="#d8d8d8"/><rect x="4" y="12.5" width="6" height="1.2" fill="#d8d8d8"/></svg>
<svg class="ab" style="left:1802px;top:138.5px" width="14" height="15" viewBox="0 0 14 15"><circle cx="7" cy="7.5" r="7" fill="#d8d8d8"/><path d="M1 6Q4 2 8 2" fill="none" stroke="#2f2f2f" stroke-width="1.2"/><circle cx="8.5" cy="9.5" r="3" fill="#2f2f2f"/><circle cx="8.5" cy="9.5" r="1.5" fill="#d8d8d8"/></svg>
<svg class="ab" style="left:1802px;top:167px" width="14" height="15" viewBox="0 0 14 15"><path d="M2.5 4A6 6 0 1 1 1.5 9" fill="none" stroke="#d8d8d8" stroke-width="1.3"/><path d="M0 3l3.5 -0.5 -0.3 3.5z" fill="#d8d8d8"/><path d="M7.5 4v4l2.5 2" fill="none" stroke="#d8d8d8" stroke-width="1.2"/></svg>
<svg class="ab" style="left:1802px;top:194.5px" width="14" height="14" viewBox="0 0 14 14"><rect x="0.6" y="0.6" width="12.8" height="12.8" fill="none" stroke="#d8d8d8" stroke-width="1.2"/><path d="M3 4h8M3 6.5h8M3 9h8" stroke="#d8d8d8" stroke-width="1"/></svg>
<div class="ab" style="left:1796px;top:60px;width:22px;height:1px;background:#3a3a3a"></div>
</body></html>
